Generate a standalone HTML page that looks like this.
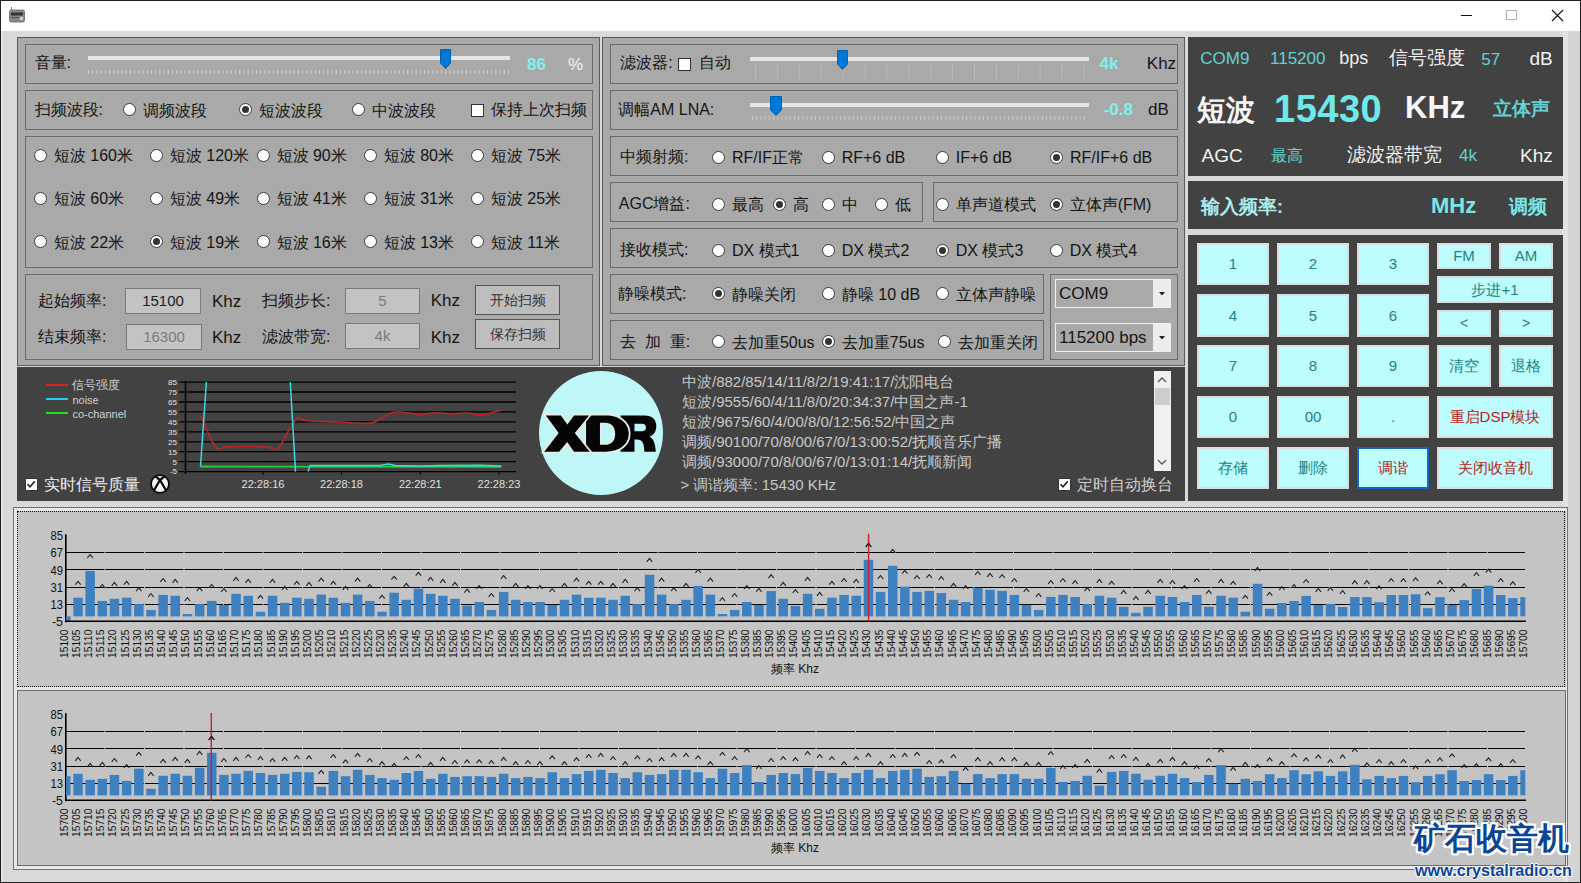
<!DOCTYPE html><html><head><meta charset="utf-8"><style>
html,body{margin:0;padding:0;}
body{width:1581px;height:883px;overflow:hidden;position:relative;background:#d9d9d9;font-family:"Liberation Sans", sans-serif;}
.t{position:absolute;white-space:nowrap;}
.r{position:absolute;}
.rad{position:absolute;width:13px;height:13px;box-sizing:border-box;border:1px solid #3a3a3a;border-radius:50%;background:#fff;}
.dot{position:absolute;width:7px;height:7px;border-radius:50%;background:#333;}
.chk{position:absolute;width:13px;height:13px;box-sizing:border-box;border:1px solid #333;background:#fff;}
</style></head><body>
<div class="r" style="left:0px;top:0px;width:1581px;height:31px;background:#fff;"></div>
<div class="r" style="left:1568px;top:31px;width:12px;height:851px;background:#d4d4d4;"></div>
<div class="r" style="left:1563px;top:31px;width:5px;height:851px;background:#e2e2e2;"></div>
<div class="r" style="left:1px;top:31px;width:2px;height:851px;background:#e4e4e4;"></div>
<div class="r" style="left:0px;top:0px;width:1581px;height:1px;background:#222;"></div>
<div class="r" style="left:0px;top:0px;width:1px;height:883px;background:#222;"></div>
<div class="r" style="left:1580px;top:0px;width:1px;height:883px;background:#222;"></div>
<div class="r" style="left:0px;top:882px;width:1581px;height:1px;background:#222;"></div>
<svg class="r" style="left:8px;top:6px" width="20" height="18" viewBox="0 0 20 18">
<line x1="3.5" y1="1" x2="3.5" y2="5" stroke="#777" stroke-width="1"/>
<rect x="1.5" y="4" width="15" height="12" rx="1.5" fill="#8a8a8a" stroke="#666" stroke-width="0.8"/>
<rect x="3" y="6.5" width="12" height="3" fill="#333"/>
<rect x="3" y="11" width="8" height="1.2" fill="#555"/>
<rect x="12" y="11" width="3" height="3" fill="#ccc"/>
</svg>
<div class="r" style="left:1461px;top:15px;width:11px;height:1px;background:#111;"></div>
<div class="r" style="left:1506px;top:10px;width:11px;height:10px;border:1px solid #b0b0b0;box-sizing:border-box;"></div>
<svg class="r" style="left:1551px;top:9px" width="13" height="13"><path d="M1 1 L12 12 M12 1 L1 12" stroke="#111" stroke-width="1.1"/></svg>
<div class="r" style="left:17px;top:37px;width:583px;height:329px;background:#a9a9a9;border:1px solid #5a5a5a;box-sizing:border-box;"></div>
<div class="r" style="left:25px;top:44px;width:568px;height:40px;background:#a9a9a9;border:1px solid #6a6a6a;box-sizing:border-box;"></div>
<div class="r" style="left:25px;top:90px;width:568px;height:40px;background:#a9a9a9;border:1px solid #6a6a6a;box-sizing:border-box;"></div>
<div class="r" style="left:25px;top:136px;width:568px;height:132px;background:#a9a9a9;border:1px solid #6a6a6a;box-sizing:border-box;"></div>
<div class="r" style="left:25px;top:274px;width:568px;height:86px;background:#a9a9a9;border:1px solid #6a6a6a;box-sizing:border-box;"></div>
<div class="t" style="left:34.5px;top:52.5px;font-size:16px;line-height:20px;color:#151515;">音量:</div>
<div class="r" style="left:88px;top:56px;width:422px;height:4px;background:#e6e6e6;"></div>
<svg class="r" style="left:88px;top:70px" width="424" height="5"><rect x="0.0" y="0" width="1" height="4" fill="#cbcbcb"/><rect x="4.2" y="0" width="1" height="4" fill="#cbcbcb"/><rect x="8.4" y="0" width="1" height="4" fill="#cbcbcb"/><rect x="12.6" y="0" width="1" height="4" fill="#cbcbcb"/><rect x="16.8" y="0" width="1" height="4" fill="#cbcbcb"/><rect x="21.0" y="0" width="1" height="4" fill="#cbcbcb"/><rect x="25.2" y="0" width="1" height="4" fill="#cbcbcb"/><rect x="29.4" y="0" width="1" height="4" fill="#cbcbcb"/><rect x="33.6" y="0" width="1" height="4" fill="#cbcbcb"/><rect x="37.8" y="0" width="1" height="4" fill="#cbcbcb"/><rect x="42.0" y="0" width="1" height="4" fill="#cbcbcb"/><rect x="46.2" y="0" width="1" height="4" fill="#cbcbcb"/><rect x="50.4" y="0" width="1" height="4" fill="#cbcbcb"/><rect x="54.6" y="0" width="1" height="4" fill="#cbcbcb"/><rect x="58.8" y="0" width="1" height="4" fill="#cbcbcb"/><rect x="63.0" y="0" width="1" height="4" fill="#cbcbcb"/><rect x="67.2" y="0" width="1" height="4" fill="#cbcbcb"/><rect x="71.4" y="0" width="1" height="4" fill="#cbcbcb"/><rect x="75.6" y="0" width="1" height="4" fill="#cbcbcb"/><rect x="79.8" y="0" width="1" height="4" fill="#cbcbcb"/><rect x="84.0" y="0" width="1" height="4" fill="#cbcbcb"/><rect x="88.2" y="0" width="1" height="4" fill="#cbcbcb"/><rect x="92.4" y="0" width="1" height="4" fill="#cbcbcb"/><rect x="96.6" y="0" width="1" height="4" fill="#cbcbcb"/><rect x="100.8" y="0" width="1" height="4" fill="#cbcbcb"/><rect x="105.0" y="0" width="1" height="4" fill="#cbcbcb"/><rect x="109.2" y="0" width="1" height="4" fill="#cbcbcb"/><rect x="113.4" y="0" width="1" height="4" fill="#cbcbcb"/><rect x="117.6" y="0" width="1" height="4" fill="#cbcbcb"/><rect x="121.8" y="0" width="1" height="4" fill="#cbcbcb"/><rect x="126.0" y="0" width="1" height="4" fill="#cbcbcb"/><rect x="130.2" y="0" width="1" height="4" fill="#cbcbcb"/><rect x="134.4" y="0" width="1" height="4" fill="#cbcbcb"/><rect x="138.6" y="0" width="1" height="4" fill="#cbcbcb"/><rect x="142.8" y="0" width="1" height="4" fill="#cbcbcb"/><rect x="147.0" y="0" width="1" height="4" fill="#cbcbcb"/><rect x="151.2" y="0" width="1" height="4" fill="#cbcbcb"/><rect x="155.4" y="0" width="1" height="4" fill="#cbcbcb"/><rect x="159.6" y="0" width="1" height="4" fill="#cbcbcb"/><rect x="163.8" y="0" width="1" height="4" fill="#cbcbcb"/><rect x="168.0" y="0" width="1" height="4" fill="#cbcbcb"/><rect x="172.2" y="0" width="1" height="4" fill="#cbcbcb"/><rect x="176.4" y="0" width="1" height="4" fill="#cbcbcb"/><rect x="180.6" y="0" width="1" height="4" fill="#cbcbcb"/><rect x="184.8" y="0" width="1" height="4" fill="#cbcbcb"/><rect x="189.0" y="0" width="1" height="4" fill="#cbcbcb"/><rect x="193.2" y="0" width="1" height="4" fill="#cbcbcb"/><rect x="197.4" y="0" width="1" height="4" fill="#cbcbcb"/><rect x="201.6" y="0" width="1" height="4" fill="#cbcbcb"/><rect x="205.8" y="0" width="1" height="4" fill="#cbcbcb"/><rect x="210.0" y="0" width="1" height="4" fill="#cbcbcb"/><rect x="214.2" y="0" width="1" height="4" fill="#cbcbcb"/><rect x="218.4" y="0" width="1" height="4" fill="#cbcbcb"/><rect x="222.6" y="0" width="1" height="4" fill="#cbcbcb"/><rect x="226.8" y="0" width="1" height="4" fill="#cbcbcb"/><rect x="231.0" y="0" width="1" height="4" fill="#cbcbcb"/><rect x="235.2" y="0" width="1" height="4" fill="#cbcbcb"/><rect x="239.4" y="0" width="1" height="4" fill="#cbcbcb"/><rect x="243.6" y="0" width="1" height="4" fill="#cbcbcb"/><rect x="247.8" y="0" width="1" height="4" fill="#cbcbcb"/><rect x="252.0" y="0" width="1" height="4" fill="#cbcbcb"/><rect x="256.2" y="0" width="1" height="4" fill="#cbcbcb"/><rect x="260.4" y="0" width="1" height="4" fill="#cbcbcb"/><rect x="264.6" y="0" width="1" height="4" fill="#cbcbcb"/><rect x="268.8" y="0" width="1" height="4" fill="#cbcbcb"/><rect x="273.0" y="0" width="1" height="4" fill="#cbcbcb"/><rect x="277.2" y="0" width="1" height="4" fill="#cbcbcb"/><rect x="281.4" y="0" width="1" height="4" fill="#cbcbcb"/><rect x="285.6" y="0" width="1" height="4" fill="#cbcbcb"/><rect x="289.8" y="0" width="1" height="4" fill="#cbcbcb"/><rect x="294.0" y="0" width="1" height="4" fill="#cbcbcb"/><rect x="298.2" y="0" width="1" height="4" fill="#cbcbcb"/><rect x="302.4" y="0" width="1" height="4" fill="#cbcbcb"/><rect x="306.6" y="0" width="1" height="4" fill="#cbcbcb"/><rect x="310.8" y="0" width="1" height="4" fill="#cbcbcb"/><rect x="315.0" y="0" width="1" height="4" fill="#cbcbcb"/><rect x="319.2" y="0" width="1" height="4" fill="#cbcbcb"/><rect x="323.4" y="0" width="1" height="4" fill="#cbcbcb"/><rect x="327.6" y="0" width="1" height="4" fill="#cbcbcb"/><rect x="331.8" y="0" width="1" height="4" fill="#cbcbcb"/><rect x="336.0" y="0" width="1" height="4" fill="#cbcbcb"/><rect x="340.2" y="0" width="1" height="4" fill="#cbcbcb"/><rect x="344.4" y="0" width="1" height="4" fill="#cbcbcb"/><rect x="348.6" y="0" width="1" height="4" fill="#cbcbcb"/><rect x="352.8" y="0" width="1" height="4" fill="#cbcbcb"/><rect x="357.0" y="0" width="1" height="4" fill="#cbcbcb"/><rect x="361.2" y="0" width="1" height="4" fill="#cbcbcb"/><rect x="365.4" y="0" width="1" height="4" fill="#cbcbcb"/><rect x="369.6" y="0" width="1" height="4" fill="#cbcbcb"/><rect x="373.8" y="0" width="1" height="4" fill="#cbcbcb"/><rect x="378.0" y="0" width="1" height="4" fill="#cbcbcb"/><rect x="382.2" y="0" width="1" height="4" fill="#cbcbcb"/><rect x="386.4" y="0" width="1" height="4" fill="#cbcbcb"/><rect x="390.6" y="0" width="1" height="4" fill="#cbcbcb"/><rect x="394.8" y="0" width="1" height="4" fill="#cbcbcb"/><rect x="399.0" y="0" width="1" height="4" fill="#cbcbcb"/><rect x="403.2" y="0" width="1" height="4" fill="#cbcbcb"/><rect x="407.4" y="0" width="1" height="4" fill="#cbcbcb"/><rect x="411.6" y="0" width="1" height="4" fill="#cbcbcb"/><rect x="415.8" y="0" width="1" height="4" fill="#cbcbcb"/><rect x="420.0" y="0" width="1" height="4" fill="#cbcbcb"/></svg>
<svg class="r" style="left:440px;top:49px" width="12" height="21"><path d="M0.5 0.5 H10.5 V14 L5.5 19.5 L0.5 14 Z" fill="#0078d7" stroke="#0063b1" stroke-width="1"/></svg>
<div class="t" style="left:527.0px;top:53.5px;font-size:17px;line-height:22px;color:#7ff0ee;font-weight:bold;">86</div>
<div class="t" style="left:568.0px;top:54.0px;font-size:17px;line-height:22px;color:#f4f4f4;">%</div>
<div class="t" style="left:34.5px;top:99.5px;font-size:16px;line-height:20px;color:#151515;">扫频波段:</div>
<div class="rad" style="left:123.0px;top:103.0px;"></div>
<div class="t" style="left:143.0px;top:100.5px;font-size:16px;line-height:20px;color:#151515;">调频波段</div>
<div class="rad" style="left:238.8px;top:103.0px;"></div>
<div class="dot" style="left:241.8px;top:106.0px;"></div>
<div class="t" style="left:258.8px;top:100.5px;font-size:16px;line-height:20px;color:#151515;">短波波段</div>
<div class="rad" style="left:351.8px;top:103.0px;"></div>
<div class="t" style="left:371.8px;top:100.5px;font-size:16px;line-height:20px;color:#151515;">中波波段</div>
<div class="chk" style="left:471px;top:104px;"></div>
<div class="t" style="left:491.3px;top:99.5px;font-size:16px;line-height:20px;color:#151515;">保持上次扫频</div>
<div class="rad" style="left:33.8px;top:148.5px;"></div>
<div class="t" style="left:53.8px;top:146.0px;font-size:16px;line-height:20px;color:#151515;">短波 160米</div>
<div class="rad" style="left:149.8px;top:148.5px;"></div>
<div class="t" style="left:169.8px;top:146.0px;font-size:16px;line-height:20px;color:#151515;">短波 120米</div>
<div class="rad" style="left:256.5px;top:148.5px;"></div>
<div class="t" style="left:276.5px;top:146.0px;font-size:16px;line-height:20px;color:#151515;">短波 90米</div>
<div class="rad" style="left:363.7px;top:148.5px;"></div>
<div class="t" style="left:383.7px;top:146.0px;font-size:16px;line-height:20px;color:#151515;">短波 80米</div>
<div class="rad" style="left:470.9px;top:148.5px;"></div>
<div class="t" style="left:490.9px;top:146.0px;font-size:16px;line-height:20px;color:#151515;">短波 75米</div>
<div class="rad" style="left:33.8px;top:191.8px;"></div>
<div class="t" style="left:53.8px;top:189.3px;font-size:16px;line-height:20px;color:#151515;">短波 60米</div>
<div class="rad" style="left:149.8px;top:191.8px;"></div>
<div class="t" style="left:169.8px;top:189.3px;font-size:16px;line-height:20px;color:#151515;">短波 49米</div>
<div class="rad" style="left:256.5px;top:191.8px;"></div>
<div class="t" style="left:276.5px;top:189.3px;font-size:16px;line-height:20px;color:#151515;">短波 41米</div>
<div class="rad" style="left:363.7px;top:191.8px;"></div>
<div class="t" style="left:383.7px;top:189.3px;font-size:16px;line-height:20px;color:#151515;">短波 31米</div>
<div class="rad" style="left:470.9px;top:191.8px;"></div>
<div class="t" style="left:490.9px;top:189.3px;font-size:16px;line-height:20px;color:#151515;">短波 25米</div>
<div class="rad" style="left:33.8px;top:235.3px;"></div>
<div class="t" style="left:53.8px;top:232.8px;font-size:16px;line-height:20px;color:#151515;">短波 22米</div>
<div class="rad" style="left:149.8px;top:235.3px;"></div>
<div class="dot" style="left:152.8px;top:238.3px;"></div>
<div class="t" style="left:169.8px;top:232.8px;font-size:16px;line-height:20px;color:#151515;">短波 19米</div>
<div class="rad" style="left:256.5px;top:235.3px;"></div>
<div class="t" style="left:276.5px;top:232.8px;font-size:16px;line-height:20px;color:#151515;">短波 16米</div>
<div class="rad" style="left:363.7px;top:235.3px;"></div>
<div class="t" style="left:383.7px;top:232.8px;font-size:16px;line-height:20px;color:#151515;">短波 13米</div>
<div class="rad" style="left:470.9px;top:235.3px;"></div>
<div class="t" style="left:490.9px;top:232.8px;font-size:16px;line-height:20px;color:#151515;">短波 11米</div>
<div class="t" style="left:38.0px;top:291.0px;font-size:16px;line-height:20px;color:#151515;">起始频率:</div>
<div class="r" style="left:125px;top:288px;width:76px;height:26px;background:#c3c3c3;border:1px solid #7a7a7a;box-sizing:border-box;"></div>
<div class="t" style="left:125px;top:288px;width:76px;height:26px;line-height:26px;text-align:center;font-size:15px;color:#222;">15100</div>
<div class="t" style="left:212.0px;top:290.5px;font-size:17px;line-height:22px;color:#151515;">Khz</div>
<div class="t" style="left:262.0px;top:290.5px;font-size:16px;line-height:20px;color:#151515;">扫频步长:</div>
<div class="r" style="left:345px;top:288px;width:75px;height:26px;background:#c3c3c3;border:1px solid #7a7a7a;box-sizing:border-box;"></div>
<div class="t" style="left:345px;top:288px;width:75px;height:26px;line-height:26px;text-align:center;font-size:15px;color:#7b7b7b;">5</div>
<div class="t" style="left:430.7px;top:289.5px;font-size:17px;line-height:22px;color:#151515;">Khz</div>
<div class="r" style="left:475px;top:285px;width:85px;height:30px;background:#bdbdbd;border:1px solid #555;box-sizing:border-box;"></div>
<div class="t" style="left:475px;top:285px;width:85px;height:30px;line-height:30px;text-align:center;font-size:14px;color:#333;">开始扫频</div>
<div class="t" style="left:38.0px;top:327.0px;font-size:16px;line-height:20px;color:#151515;">结束频率:</div>
<div class="r" style="left:126px;top:324px;width:76px;height:26px;background:#c3c3c3;border:1px solid #7a7a7a;box-sizing:border-box;"></div>
<div class="t" style="left:126px;top:324px;width:76px;height:26px;line-height:26px;text-align:center;font-size:15px;color:#7b7b7b;">16300</div>
<div class="t" style="left:212.0px;top:327.0px;font-size:17px;line-height:22px;color:#151515;">Khz</div>
<div class="t" style="left:262.0px;top:327.0px;font-size:16px;line-height:20px;color:#151515;">滤波带宽:</div>
<div class="r" style="left:345px;top:323px;width:75px;height:26px;background:#c3c3c3;border:1px solid #7a7a7a;box-sizing:border-box;"></div>
<div class="t" style="left:345px;top:323px;width:75px;height:26px;line-height:26px;text-align:center;font-size:15px;color:#7b7b7b;">4k</div>
<div class="t" style="left:430.7px;top:327.0px;font-size:17px;line-height:22px;color:#151515;">Khz</div>
<div class="r" style="left:475px;top:319px;width:85px;height:30px;background:#bdbdbd;border:1px solid #555;box-sizing:border-box;"></div>
<div class="t" style="left:475px;top:319px;width:85px;height:30px;line-height:30px;text-align:center;font-size:14px;color:#333;">保存扫频</div>
<div class="r" style="left:602px;top:37px;width:583px;height:329px;background:#a9a9a9;border:1px solid #5a5a5a;box-sizing:border-box;"></div>
<div class="r" style="left:610px;top:44px;width:568px;height:40px;background:#a9a9a9;border:1px solid #6a6a6a;box-sizing:border-box;"></div>
<div class="r" style="left:610px;top:90px;width:568px;height:40px;background:#a9a9a9;border:1px solid #6a6a6a;box-sizing:border-box;"></div>
<div class="r" style="left:610px;top:136px;width:568px;height:40px;background:#a9a9a9;border:1px solid #6a6a6a;box-sizing:border-box;"></div>
<div class="r" style="left:610px;top:182px;width:313px;height:40px;background:#a9a9a9;border:1px solid #6a6a6a;box-sizing:border-box;"></div>
<div class="r" style="left:933px;top:182px;width:245px;height:40px;background:#a9a9a9;border:1px solid #6a6a6a;box-sizing:border-box;"></div>
<div class="r" style="left:610px;top:228px;width:568px;height:40px;background:#a9a9a9;border:1px solid #6a6a6a;box-sizing:border-box;"></div>
<div class="r" style="left:610px;top:274px;width:434px;height:40px;background:#a9a9a9;border:1px solid #6a6a6a;box-sizing:border-box;"></div>
<div class="r" style="left:610px;top:320px;width:434px;height:40px;background:#a9a9a9;border:1px solid #6a6a6a;box-sizing:border-box;"></div>
<div class="r" style="left:1050px;top:274px;width:128px;height:86px;background:#a9a9a9;border:1px solid #6a6a6a;box-sizing:border-box;"></div>
<div class="t" style="left:620.3px;top:53.0px;font-size:16px;line-height:20px;color:#151515;">滤波器:</div>
<div class="chk" style="left:678px;top:58px;"></div>
<div class="t" style="left:698.6px;top:53.0px;font-size:16px;line-height:20px;color:#151515;">自动</div>
<div class="r" style="left:750px;top:57px;width:339px;height:4px;background:#e6e6e6;"></div>
<svg class="r" style="left:750px;top:64px" width="345" height="16"><rect x="5.0" y="0" width="1" height="15" fill="#bababa"/><rect x="26.9" y="0" width="1" height="15" fill="#bababa"/><rect x="48.8" y="0" width="1" height="15" fill="#bababa"/><rect x="70.7" y="0" width="1" height="15" fill="#bababa"/><rect x="92.6" y="0" width="1" height="15" fill="#bababa"/><rect x="114.5" y="0" width="1" height="15" fill="#bababa"/><rect x="136.4" y="0" width="1" height="15" fill="#bababa"/><rect x="158.3" y="0" width="1" height="15" fill="#bababa"/><rect x="180.2" y="0" width="1" height="15" fill="#bababa"/><rect x="202.1" y="0" width="1" height="15" fill="#bababa"/><rect x="224.0" y="0" width="1" height="15" fill="#bababa"/><rect x="245.9" y="0" width="1" height="15" fill="#bababa"/><rect x="267.8" y="0" width="1" height="15" fill="#bababa"/><rect x="289.7" y="0" width="1" height="15" fill="#bababa"/><rect x="311.6" y="0" width="1" height="15" fill="#bababa"/><rect x="333.5" y="0" width="1" height="15" fill="#bababa"/></svg>
<svg class="r" style="left:837px;top:50px" width="12" height="21"><path d="M0.5 0.5 H10.5 V14 L5.5 19.5 L0.5 14 Z" fill="#0078d7" stroke="#0063b1" stroke-width="1"/></svg>
<div class="t" style="left:1099.6px;top:52.5px;font-size:17px;line-height:22px;color:#7ff0ee;font-weight:bold;">4k</div>
<div class="t" style="left:1146.8px;top:52.5px;font-size:17px;line-height:22px;color:#151515;">Khz</div>
<div class="t" style="left:618.3px;top:100.0px;font-size:16px;line-height:20px;color:#151515;">调幅AM LNA:</div>
<div class="r" style="left:750px;top:103px;width:339px;height:4px;background:#e6e6e6;"></div>
<svg class="r" style="left:752px;top:116px" width="345" height="5"><rect x="0.0" y="0" width="1" height="4" fill="#cbcbcb"/><rect x="4.2" y="0" width="1" height="4" fill="#cbcbcb"/><rect x="8.4" y="0" width="1" height="4" fill="#cbcbcb"/><rect x="12.6" y="0" width="1" height="4" fill="#cbcbcb"/><rect x="16.8" y="0" width="1" height="4" fill="#cbcbcb"/><rect x="21.0" y="0" width="1" height="4" fill="#cbcbcb"/><rect x="25.2" y="0" width="1" height="4" fill="#cbcbcb"/><rect x="29.4" y="0" width="1" height="4" fill="#cbcbcb"/><rect x="33.6" y="0" width="1" height="4" fill="#cbcbcb"/><rect x="37.8" y="0" width="1" height="4" fill="#cbcbcb"/><rect x="42.0" y="0" width="1" height="4" fill="#cbcbcb"/><rect x="46.2" y="0" width="1" height="4" fill="#cbcbcb"/><rect x="50.4" y="0" width="1" height="4" fill="#cbcbcb"/><rect x="54.6" y="0" width="1" height="4" fill="#cbcbcb"/><rect x="58.8" y="0" width="1" height="4" fill="#cbcbcb"/><rect x="63.0" y="0" width="1" height="4" fill="#cbcbcb"/><rect x="67.2" y="0" width="1" height="4" fill="#cbcbcb"/><rect x="71.4" y="0" width="1" height="4" fill="#cbcbcb"/><rect x="75.6" y="0" width="1" height="4" fill="#cbcbcb"/><rect x="79.8" y="0" width="1" height="4" fill="#cbcbcb"/><rect x="84.0" y="0" width="1" height="4" fill="#cbcbcb"/><rect x="88.2" y="0" width="1" height="4" fill="#cbcbcb"/><rect x="92.4" y="0" width="1" height="4" fill="#cbcbcb"/><rect x="96.6" y="0" width="1" height="4" fill="#cbcbcb"/><rect x="100.8" y="0" width="1" height="4" fill="#cbcbcb"/><rect x="105.0" y="0" width="1" height="4" fill="#cbcbcb"/><rect x="109.2" y="0" width="1" height="4" fill="#cbcbcb"/><rect x="113.4" y="0" width="1" height="4" fill="#cbcbcb"/><rect x="117.6" y="0" width="1" height="4" fill="#cbcbcb"/><rect x="121.8" y="0" width="1" height="4" fill="#cbcbcb"/><rect x="126.0" y="0" width="1" height="4" fill="#cbcbcb"/><rect x="130.2" y="0" width="1" height="4" fill="#cbcbcb"/><rect x="134.4" y="0" width="1" height="4" fill="#cbcbcb"/><rect x="138.6" y="0" width="1" height="4" fill="#cbcbcb"/><rect x="142.8" y="0" width="1" height="4" fill="#cbcbcb"/><rect x="147.0" y="0" width="1" height="4" fill="#cbcbcb"/><rect x="151.2" y="0" width="1" height="4" fill="#cbcbcb"/><rect x="155.4" y="0" width="1" height="4" fill="#cbcbcb"/><rect x="159.6" y="0" width="1" height="4" fill="#cbcbcb"/><rect x="163.8" y="0" width="1" height="4" fill="#cbcbcb"/><rect x="168.0" y="0" width="1" height="4" fill="#cbcbcb"/><rect x="172.2" y="0" width="1" height="4" fill="#cbcbcb"/><rect x="176.4" y="0" width="1" height="4" fill="#cbcbcb"/><rect x="180.6" y="0" width="1" height="4" fill="#cbcbcb"/><rect x="184.8" y="0" width="1" height="4" fill="#cbcbcb"/><rect x="189.0" y="0" width="1" height="4" fill="#cbcbcb"/><rect x="193.2" y="0" width="1" height="4" fill="#cbcbcb"/><rect x="197.4" y="0" width="1" height="4" fill="#cbcbcb"/><rect x="201.6" y="0" width="1" height="4" fill="#cbcbcb"/><rect x="205.8" y="0" width="1" height="4" fill="#cbcbcb"/><rect x="210.0" y="0" width="1" height="4" fill="#cbcbcb"/><rect x="214.2" y="0" width="1" height="4" fill="#cbcbcb"/><rect x="218.4" y="0" width="1" height="4" fill="#cbcbcb"/><rect x="222.6" y="0" width="1" height="4" fill="#cbcbcb"/><rect x="226.8" y="0" width="1" height="4" fill="#cbcbcb"/><rect x="231.0" y="0" width="1" height="4" fill="#cbcbcb"/><rect x="235.2" y="0" width="1" height="4" fill="#cbcbcb"/><rect x="239.4" y="0" width="1" height="4" fill="#cbcbcb"/><rect x="243.6" y="0" width="1" height="4" fill="#cbcbcb"/><rect x="247.8" y="0" width="1" height="4" fill="#cbcbcb"/><rect x="252.0" y="0" width="1" height="4" fill="#cbcbcb"/><rect x="256.2" y="0" width="1" height="4" fill="#cbcbcb"/><rect x="260.4" y="0" width="1" height="4" fill="#cbcbcb"/><rect x="264.6" y="0" width="1" height="4" fill="#cbcbcb"/><rect x="268.8" y="0" width="1" height="4" fill="#cbcbcb"/><rect x="273.0" y="0" width="1" height="4" fill="#cbcbcb"/><rect x="277.2" y="0" width="1" height="4" fill="#cbcbcb"/><rect x="281.4" y="0" width="1" height="4" fill="#cbcbcb"/><rect x="285.6" y="0" width="1" height="4" fill="#cbcbcb"/><rect x="289.8" y="0" width="1" height="4" fill="#cbcbcb"/><rect x="294.0" y="0" width="1" height="4" fill="#cbcbcb"/><rect x="298.2" y="0" width="1" height="4" fill="#cbcbcb"/><rect x="302.4" y="0" width="1" height="4" fill="#cbcbcb"/><rect x="306.6" y="0" width="1" height="4" fill="#cbcbcb"/><rect x="310.8" y="0" width="1" height="4" fill="#cbcbcb"/><rect x="315.0" y="0" width="1" height="4" fill="#cbcbcb"/><rect x="319.2" y="0" width="1" height="4" fill="#cbcbcb"/><rect x="323.4" y="0" width="1" height="4" fill="#cbcbcb"/><rect x="327.6" y="0" width="1" height="4" fill="#cbcbcb"/><rect x="331.8" y="0" width="1" height="4" fill="#cbcbcb"/></svg>
<svg class="r" style="left:770px;top:96px" width="13" height="21"><path d="M0.5 0.5 H11.5 V14 L6 19.5 L0.5 14 Z" fill="#0078d7" stroke="#0063b1" stroke-width="1"/></svg>
<div class="t" style="left:1103.7px;top:98.5px;font-size:17px;line-height:22px;color:#7ff0ee;font-weight:bold;">-0.8</div>
<div class="t" style="left:1148.0px;top:98.5px;font-size:17px;line-height:22px;color:#151515;">dB</div>
<div class="t" style="left:620.0px;top:147.0px;font-size:16px;line-height:20px;color:#151515;">中频射频:</div>
<div class="rad" style="left:712.0px;top:150.5px;"></div>
<div class="t" style="left:732.0px;top:148.0px;font-size:16px;line-height:20px;color:#151515;">RF/IF正常</div>
<div class="rad" style="left:821.7px;top:150.5px;"></div>
<div class="t" style="left:841.7px;top:148.0px;font-size:16px;line-height:20px;color:#151515;">RF+6 dB</div>
<div class="rad" style="left:935.8px;top:150.5px;"></div>
<div class="t" style="left:955.8px;top:148.0px;font-size:16px;line-height:20px;color:#151515;">IF+6 dB</div>
<div class="rad" style="left:1050.0px;top:150.5px;"></div>
<div class="dot" style="left:1053.0px;top:153.5px;"></div>
<div class="t" style="left:1070.0px;top:148.0px;font-size:16px;line-height:20px;color:#151515;">RF/IF+6 dB</div>
<div class="t" style="left:618.8px;top:194.0px;font-size:16px;line-height:20px;color:#151515;">AGC增益:</div>
<div class="rad" style="left:711.9px;top:197.5px;"></div>
<div class="t" style="left:731.9px;top:195.0px;font-size:16px;line-height:20px;color:#151515;">最高</div>
<div class="rad" style="left:773.1px;top:197.5px;"></div>
<div class="dot" style="left:776.1px;top:200.5px;"></div>
<div class="t" style="left:793.1px;top:195.0px;font-size:16px;line-height:20px;color:#151515;">高</div>
<div class="rad" style="left:821.8px;top:197.5px;"></div>
<div class="t" style="left:841.8px;top:195.0px;font-size:16px;line-height:20px;color:#151515;">中</div>
<div class="rad" style="left:875.0px;top:197.5px;"></div>
<div class="t" style="left:895.0px;top:195.0px;font-size:16px;line-height:20px;color:#151515;">低</div>
<div class="rad" style="left:935.8px;top:197.5px;"></div>
<div class="t" style="left:955.8px;top:195.0px;font-size:16px;line-height:20px;color:#151515;">单声道模式</div>
<div class="rad" style="left:1049.7px;top:197.5px;"></div>
<div class="dot" style="left:1052.7px;top:200.5px;"></div>
<div class="t" style="left:1069.7px;top:195.0px;font-size:16px;line-height:20px;color:#151515;">立体声(FM)</div>
<div class="t" style="left:620.0px;top:240.0px;font-size:16px;line-height:20px;color:#151515;">接收模式:</div>
<div class="rad" style="left:711.9px;top:243.5px;"></div>
<div class="t" style="left:731.9px;top:241.0px;font-size:16px;line-height:20px;color:#151515;">DX 模式1</div>
<div class="rad" style="left:821.8px;top:243.5px;"></div>
<div class="t" style="left:841.8px;top:241.0px;font-size:16px;line-height:20px;color:#151515;">DX 模式2</div>
<div class="rad" style="left:935.8px;top:243.5px;"></div>
<div class="dot" style="left:938.8px;top:246.5px;"></div>
<div class="t" style="left:955.8px;top:241.0px;font-size:16px;line-height:20px;color:#151515;">DX 模式3</div>
<div class="rad" style="left:1049.7px;top:243.5px;"></div>
<div class="t" style="left:1069.7px;top:241.0px;font-size:16px;line-height:20px;color:#151515;">DX 模式4</div>
<div class="t" style="left:618.0px;top:284.0px;font-size:16px;line-height:20px;color:#151515;">静噪模式:</div>
<div class="rad" style="left:711.9px;top:287.0px;"></div>
<div class="dot" style="left:714.9px;top:290.0px;"></div>
<div class="t" style="left:731.9px;top:284.5px;font-size:16px;line-height:20px;color:#151515;">静噪关闭</div>
<div class="rad" style="left:821.8px;top:287.0px;"></div>
<div class="t" style="left:841.8px;top:284.5px;font-size:16px;line-height:20px;color:#151515;">静噪 10 dB</div>
<div class="rad" style="left:935.8px;top:287.0px;"></div>
<div class="t" style="left:955.8px;top:284.5px;font-size:16px;line-height:20px;color:#151515;">立体声静噪</div>
<div class="t" style="left:620.0px;top:331.5px;font-size:16px;line-height:20px;color:#151515;">去&nbsp;&nbsp;加&nbsp;&nbsp;重:</div>
<div class="rad" style="left:711.9px;top:335.0px;"></div>
<div class="t" style="left:731.9px;top:332.5px;font-size:16px;line-height:20px;color:#151515;">去加重50us</div>
<div class="rad" style="left:821.8px;top:335.0px;"></div>
<div class="dot" style="left:824.8px;top:338.0px;"></div>
<div class="t" style="left:841.8px;top:332.5px;font-size:16px;line-height:20px;color:#151515;">去加重75us</div>
<div class="rad" style="left:937.5px;top:335.0px;"></div>
<div class="t" style="left:957.5px;top:332.5px;font-size:16px;line-height:20px;color:#151515;">去加重关闭</div>
<div class="r" style="left:1055px;top:279px;width:116px;height:29px;background:#a9a9a9;border:1px solid #f0f0f0;box-sizing:border-box;"></div>
<div class="r" style="left:1153px;top:280px;width:17px;height:27px;background:#ececec;"></div>
<svg class="r" style="left:1159px;top:291.5px" width="6" height="4"><path d="M0 0 H6 L3 3.5 Z" fill="#222"/></svg>
<div class="t" style="left:1059.0px;top:282.5px;font-size:17px;line-height:22px;color:#151515;">COM9</div>
<div class="r" style="left:1055px;top:323px;width:116px;height:29px;background:#a9a9a9;border:1px solid #f0f0f0;box-sizing:border-box;"></div>
<div class="r" style="left:1153px;top:324px;width:17px;height:27px;background:#ececec;"></div>
<svg class="r" style="left:1159px;top:335.5px" width="6" height="4"><path d="M0 0 H6 L3 3.5 Z" fill="#222"/></svg>
<div class="t" style="left:1059.0px;top:326.5px;font-size:17px;line-height:22px;color:#151515;">115200 bps</div>
<div class="r" style="left:1188px;top:37px;width:375px;height:139px;background:#424242;"></div>
<div class="r" style="left:1188px;top:181px;width:375px;height:48px;background:#424242;"></div>
<div class="r" style="left:1188px;top:235px;width:375px;height:266px;background:#424242;"></div>
<div class="t" style="left:1200.3px;top:48.0px;font-size:17px;line-height:22px;color:#62d3d3;">COM9</div>
<div class="t" style="left:1270.0px;top:48.0px;font-size:17px;line-height:22px;color:#62d3d3;">115200</div>
<div class="t" style="left:1339.3px;top:46.5px;font-size:18px;line-height:23px;color:#f2f2f2;">bps</div>
<div class="t" style="left:1389.0px;top:46.0px;font-size:19px;line-height:24px;color:#f2f2f2;">信号强度</div>
<div class="t" style="left:1481.3px;top:49.0px;font-size:17px;line-height:22px;color:#62d3d3;">57</div>
<div class="t" style="left:1529.5px;top:47.0px;font-size:19px;line-height:24px;color:#f2f2f2;">dB</div>
<div class="t" style="left:1197.0px;top:91.5px;font-size:29px;line-height:37px;color:#f8f8f8;font-weight:bold;">短波</div>
<div class="t" style="left:1274.0px;top:84.5px;font-size:38px;line-height:49px;color:#6ee8e8;font-weight:bold;letter-spacing:0.5px;">15430</div>
<div class="t" style="left:1405.0px;top:88.0px;font-size:31px;line-height:40px;color:#f8f8f8;font-weight:bold;">KHz</div>
<div class="t" style="left:1493.0px;top:97.0px;font-size:19px;line-height:24px;color:#62d3d3;font-weight:bold;">立体声</div>
<div class="t" style="left:1201.5px;top:143.5px;font-size:19px;line-height:24px;color:#f2f2f2;">AGC</div>
<div class="t" style="left:1270.8px;top:146.0px;font-size:16px;line-height:20px;color:#62d3d3;">最高</div>
<div class="t" style="left:1347.4px;top:143.0px;font-size:19px;line-height:24px;color:#f2f2f2;">滤波器带宽</div>
<div class="t" style="left:1459.0px;top:145.0px;font-size:17px;line-height:22px;color:#62d3d3;">4k</div>
<div class="t" style="left:1520.0px;top:143.5px;font-size:19px;line-height:24px;color:#f2f2f2;">Khz</div>
<div class="t" style="left:1200.8px;top:194.5px;font-size:19px;line-height:24px;color:#a8ecec;font-weight:bold;">输入频率:</div>
<div class="t" style="left:1431.0px;top:191.5px;font-size:22px;line-height:28px;color:#7be6e6;font-weight:bold;">MHz</div>
<div class="t" style="left:1509.0px;top:194.5px;font-size:19px;line-height:24px;color:#7be6e6;font-weight:bold;">调频</div>
<div class="r" style="left:1197px;top:243px;width:72px;height:42px;background:#bdfdfd;border:2px solid #dcdcdc;box-sizing:border-box;"></div>
<div class="t" style="left:1197px;top:243px;width:72px;height:42px;line-height:42px;text-align:center;font-size:15px;color:#238282;">1</div>
<div class="r" style="left:1277px;top:243px;width:72px;height:42px;background:#bdfdfd;border:2px solid #dcdcdc;box-sizing:border-box;"></div>
<div class="t" style="left:1277px;top:243px;width:72px;height:42px;line-height:42px;text-align:center;font-size:15px;color:#238282;">2</div>
<div class="r" style="left:1357px;top:243px;width:72px;height:42px;background:#bdfdfd;border:2px solid #dcdcdc;box-sizing:border-box;"></div>
<div class="t" style="left:1357px;top:243px;width:72px;height:42px;line-height:42px;text-align:center;font-size:15px;color:#238282;">3</div>
<div class="r" style="left:1197px;top:294px;width:72px;height:43px;background:#bdfdfd;border:2px solid #dcdcdc;box-sizing:border-box;"></div>
<div class="t" style="left:1197px;top:294px;width:72px;height:43px;line-height:43px;text-align:center;font-size:15px;color:#238282;">4</div>
<div class="r" style="left:1277px;top:294px;width:72px;height:43px;background:#bdfdfd;border:2px solid #dcdcdc;box-sizing:border-box;"></div>
<div class="t" style="left:1277px;top:294px;width:72px;height:43px;line-height:43px;text-align:center;font-size:15px;color:#238282;">5</div>
<div class="r" style="left:1357px;top:294px;width:72px;height:43px;background:#bdfdfd;border:2px solid #dcdcdc;box-sizing:border-box;"></div>
<div class="t" style="left:1357px;top:294px;width:72px;height:43px;line-height:43px;text-align:center;font-size:15px;color:#238282;">6</div>
<div class="r" style="left:1197px;top:345px;width:72px;height:42px;background:#bdfdfd;border:2px solid #dcdcdc;box-sizing:border-box;"></div>
<div class="t" style="left:1197px;top:345px;width:72px;height:42px;line-height:42px;text-align:center;font-size:15px;color:#238282;">7</div>
<div class="r" style="left:1277px;top:345px;width:72px;height:42px;background:#bdfdfd;border:2px solid #dcdcdc;box-sizing:border-box;"></div>
<div class="t" style="left:1277px;top:345px;width:72px;height:42px;line-height:42px;text-align:center;font-size:15px;color:#238282;">8</div>
<div class="r" style="left:1357px;top:345px;width:72px;height:42px;background:#bdfdfd;border:2px solid #dcdcdc;box-sizing:border-box;"></div>
<div class="t" style="left:1357px;top:345px;width:72px;height:42px;line-height:42px;text-align:center;font-size:15px;color:#238282;">9</div>
<div class="r" style="left:1197px;top:396px;width:72px;height:42px;background:#bdfdfd;border:2px solid #dcdcdc;box-sizing:border-box;"></div>
<div class="t" style="left:1197px;top:396px;width:72px;height:42px;line-height:42px;text-align:center;font-size:15px;color:#238282;">0</div>
<div class="r" style="left:1277px;top:396px;width:72px;height:42px;background:#bdfdfd;border:2px solid #dcdcdc;box-sizing:border-box;"></div>
<div class="t" style="left:1277px;top:396px;width:72px;height:42px;line-height:42px;text-align:center;font-size:15px;color:#238282;">00</div>
<div class="r" style="left:1357px;top:396px;width:72px;height:42px;background:#bdfdfd;border:2px solid #dcdcdc;box-sizing:border-box;"></div>
<div class="t" style="left:1357px;top:396px;width:72px;height:42px;line-height:42px;text-align:center;font-size:15px;color:#238282;">.</div>
<div class="r" style="left:1197px;top:447px;width:72px;height:42px;background:#bdfdfd;border:2px solid #dcdcdc;box-sizing:border-box;"></div>
<div class="t" style="left:1197px;top:447px;width:72px;height:42px;line-height:42px;text-align:center;font-size:15px;color:#238282;">存储</div>
<div class="r" style="left:1277px;top:447px;width:72px;height:42px;background:#bdfdfd;border:2px solid #dcdcdc;box-sizing:border-box;"></div>
<div class="t" style="left:1277px;top:447px;width:72px;height:42px;line-height:42px;text-align:center;font-size:15px;color:#238282;">删除</div>
<div class="r" style="left:1357px;top:447px;width:72px;height:42px;background:#bdfdfd;border:2px solid #1565c0;box-sizing:border-box;"></div>
<div class="t" style="left:1357px;top:447px;width:72px;height:42px;line-height:42px;text-align:center;font-size:15px;color:#b82222;">调谐</div>
<div class="r" style="left:1437px;top:243px;width:54px;height:26px;background:#bdfdfd;border:2px solid #dcdcdc;box-sizing:border-box;"></div>
<div class="t" style="left:1437px;top:243px;width:54px;height:26px;line-height:26px;text-align:center;font-size:15px;color:#238282;">FM</div>
<div class="r" style="left:1499px;top:243px;width:54px;height:26px;background:#bdfdfd;border:2px solid #dcdcdc;box-sizing:border-box;"></div>
<div class="t" style="left:1499px;top:243px;width:54px;height:26px;line-height:26px;text-align:center;font-size:15px;color:#238282;">AM</div>
<div class="r" style="left:1437px;top:276px;width:116px;height:27px;background:#bdfdfd;border:2px solid #dcdcdc;box-sizing:border-box;"></div>
<div class="t" style="left:1437px;top:276px;width:116px;height:27px;line-height:27px;text-align:center;font-size:15px;color:#238282;">步进+1</div>
<div class="r" style="left:1437px;top:310px;width:54px;height:27px;background:#bdfdfd;border:2px solid #dcdcdc;box-sizing:border-box;"></div>
<div class="t" style="left:1437px;top:310px;width:54px;height:27px;line-height:27px;text-align:center;font-size:14px;color:#238282;">&lt;</div>
<div class="r" style="left:1499px;top:310px;width:54px;height:27px;background:#bdfdfd;border:2px solid #dcdcdc;box-sizing:border-box;"></div>
<div class="t" style="left:1499px;top:310px;width:54px;height:27px;line-height:27px;text-align:center;font-size:14px;color:#238282;">&gt;</div>
<div class="r" style="left:1437px;top:345px;width:54px;height:42px;background:#bdfdfd;border:2px solid #dcdcdc;box-sizing:border-box;"></div>
<div class="t" style="left:1437px;top:345px;width:54px;height:42px;line-height:42px;text-align:center;font-size:15px;color:#238282;">清空</div>
<div class="r" style="left:1499px;top:345px;width:54px;height:42px;background:#bdfdfd;border:2px solid #dcdcdc;box-sizing:border-box;"></div>
<div class="t" style="left:1499px;top:345px;width:54px;height:42px;line-height:42px;text-align:center;font-size:15px;color:#238282;">退格</div>
<div class="r" style="left:1437px;top:396px;width:116px;height:42px;background:#bdfdfd;border:2px solid #dcdcdc;box-sizing:border-box;"></div>
<div class="t" style="left:1437px;top:396px;width:116px;height:42px;line-height:42px;text-align:center;font-size:15px;color:#b82222;">重启DSP模块</div>
<div class="r" style="left:1437px;top:447px;width:116px;height:42px;background:#bdfdfd;border:2px solid #dcdcdc;box-sizing:border-box;"></div>
<div class="t" style="left:1437px;top:447px;width:116px;height:42px;line-height:42px;text-align:center;font-size:15px;color:#b82222;">关闭收音机</div>
<div class="r" style="left:17px;top:367px;width:1168px;height:134px;background:#424242;"></div>
<div class="r" style="left:46px;top:384px;width:22px;height:2px;background:#e02020;"></div>
<div class="r" style="left:46px;top:398px;width:22px;height:2px;background:#20d0f0;"></div>
<div class="r" style="left:46px;top:412px;width:22px;height:2px;background:#20e020;"></div>
<div class="t" style="left:72.4px;top:378.0px;font-size:11.5px;line-height:14px;color:#d0d0d0;">信号强度</div>
<div class="t" style="left:72.4px;top:392.5px;font-size:11px;line-height:14px;color:#d0d0d0;">noise</div>
<div class="t" style="left:72.4px;top:406.5px;font-size:11px;line-height:14px;color:#d0d0d0;">co-channel</div>
<svg class="r" style="left:0px;top:367px" width="560" height="134" viewBox="0 367 560 134"><line x1="179" y1="382.1" x2="516" y2="382.1" stroke="#000" stroke-width="1.3"/><text x="177" y="384.9" font-size="8" fill="#e0e0e0" text-anchor="end" font-family="Liberation Sans">85</text><line x1="179" y1="392.0" x2="516" y2="392.0" stroke="#000" stroke-width="1.3"/><text x="177" y="394.8" font-size="8" fill="#e0e0e0" text-anchor="end" font-family="Liberation Sans">75</text><line x1="179" y1="402.0" x2="516" y2="402.0" stroke="#000" stroke-width="1.3"/><text x="177" y="404.8" font-size="8" fill="#e0e0e0" text-anchor="end" font-family="Liberation Sans">65</text><line x1="179" y1="411.9" x2="516" y2="411.9" stroke="#000" stroke-width="1.3"/><text x="177" y="414.7" font-size="8" fill="#e0e0e0" text-anchor="end" font-family="Liberation Sans">55</text><line x1="179" y1="421.9" x2="516" y2="421.9" stroke="#000" stroke-width="1.3"/><text x="177" y="424.7" font-size="8" fill="#e0e0e0" text-anchor="end" font-family="Liberation Sans">45</text><line x1="179" y1="431.8" x2="516" y2="431.8" stroke="#000" stroke-width="1.3"/><text x="177" y="434.6" font-size="8" fill="#e0e0e0" text-anchor="end" font-family="Liberation Sans">35</text><line x1="179" y1="441.8" x2="516" y2="441.8" stroke="#000" stroke-width="1.3"/><text x="177" y="444.6" font-size="8" fill="#e0e0e0" text-anchor="end" font-family="Liberation Sans">25</text><line x1="179" y1="451.7" x2="516" y2="451.7" stroke="#000" stroke-width="1.3"/><text x="177" y="454.5" font-size="8" fill="#e0e0e0" text-anchor="end" font-family="Liberation Sans">15</text><line x1="179" y1="461.7" x2="516" y2="461.7" stroke="#000" stroke-width="1.3"/><text x="177" y="464.5" font-size="8" fill="#e0e0e0" text-anchor="end" font-family="Liberation Sans">5</text><line x1="179" y1="471.6" x2="516" y2="471.6" stroke="#000" stroke-width="1.3"/><text x="177" y="474.4" font-size="8" fill="#e0e0e0" text-anchor="end" font-family="Liberation Sans">-5</text><line x1="185.5" y1="381" x2="185.5" y2="474" stroke="#000" stroke-width="1.5"/><line x1="263" y1="471" x2="263" y2="475" stroke="#000" stroke-width="1"/><line x1="341.5" y1="471" x2="341.5" y2="475" stroke="#000" stroke-width="1"/><line x1="420.3" y1="471" x2="420.3" y2="475" stroke="#000" stroke-width="1"/><line x1="499" y1="471" x2="499" y2="475" stroke="#000" stroke-width="1"/><path d="M200.5 416.4 C201.1 417.5 202.6 419.6 204.2 423.0 C205.8 426.4 207.8 432.7 210.0 437.0 C212.2 441.3 214.9 447.1 217.4 448.8 C219.9 450.5 221.2 447.4 225.0 447.0 C228.8 446.6 233.3 446.5 240.0 446.5 C246.7 446.5 258.9 446.3 265.0 446.8 C271.1 447.3 273.7 449.8 276.3 449.5 C278.9 449.2 278.6 448.4 280.8 445.0 C283.0 441.6 287.2 433.1 289.6 428.9 C292.1 424.7 293.9 421.8 295.5 420.0 C297.1 418.2 297.2 417.8 299.2 417.9 C301.2 418.0 300.5 420.1 307.3 420.8 C314.1 421.5 329.4 421.6 340.0 422.0 C350.6 422.4 362.3 424.6 370.9 423.0 C379.5 421.4 385.6 414.4 391.5 412.7 C397.4 411.0 401.4 412.3 406.3 412.7 C411.2 413.1 416.1 414.9 421.0 414.9 C425.9 414.9 430.3 412.8 435.7 412.7 C441.1 412.6 448.5 414.1 453.4 414.2 C458.3 414.2 460.5 412.9 465.2 413.0 C469.9 413.1 476.7 415.0 481.4 414.9 C486.1 414.8 489.8 413.2 493.2 412.4 C496.6 411.6 500.5 410.4 502.0 410.0" fill="none" stroke="#b82828" stroke-width="1.6"/><polyline points="200.5,466.5 501.3,466.8" fill="none" stroke="#22cc44" stroke-width="1.8"/><polyline points="200.5,466.5 206.4,382" fill="none" stroke="#40d8e0" stroke-width="1.5"/><polyline points="290.3,382 295.5,471.6" fill="none" stroke="#40d8e0" stroke-width="1.5"/><polyline points="308,471.6 310.2,465.6 380,465.6 388.6,464 395,465.6 420,466 440,465.6 480,465.3 501.3,466" fill="none" stroke="#40d8e0" stroke-width="1.5"/><text x="263" y="488" font-size="11" fill="#e0e0e0" text-anchor="middle" font-family="Liberation Sans">22:28:16</text><text x="341.5" y="488" font-size="11" fill="#e0e0e0" text-anchor="middle" font-family="Liberation Sans">22:28:18</text><text x="420.3" y="488" font-size="11" fill="#e0e0e0" text-anchor="middle" font-family="Liberation Sans">22:28:21</text><text x="499" y="488" font-size="11" fill="#e0e0e0" text-anchor="middle" font-family="Liberation Sans">22:28:23</text></svg>
<div class="chk" style="left:25px;top:478px;"></div>
<svg class="r" style="left:25px;top:478px" width="12" height="12"><path d="M2.5 6.2 L5 8.8 L9.8 3.2" stroke="#222" stroke-width="1.6" fill="none"/></svg>
<div class="t" style="left:44.4px;top:475.0px;font-size:16px;line-height:20px;color:#f0f0f0;">实时信号质量</div>
<svg class="r" style="left:150px;top:473.6px" width="20" height="20" viewBox="0 0 20 20"><circle cx="10" cy="10" r="8.9" fill="#f6f6f6" stroke="#0a0a0a" stroke-width="1.8"/><path d="M4.3 16 C6.5 12 8.3 8.5 10 6.6 C11.7 8.5 13.5 12 15.7 16" stroke="#0a0a0a" stroke-width="2.2" fill="none"/><path d="M5.8 2.6 C7.5 4.2 8.8 5.4 10 6.6 C11.2 5.4 12.5 4.2 14.2 2.6" stroke="#0a0a0a" stroke-width="2.2" fill="none"/><path d="M7.6 3.9 Q10 5.6 12.4 3.9" stroke="#0a0a0a" stroke-width="1.6" fill="none"/></svg>
<div class="r" style="left:539px;top:371px;width:124px;height:124px;border-radius:50%;background:#bff7f7;"></div>
<svg class="r" style="left:535px;top:400px" width="130" height="65" viewBox="0 0 1581 790"><path fill-rule="evenodd" d="M1040 187 H1330 C1430 187 1475 240 1475 320 C1475 390 1440 430 1390 445 C1440 470 1460 520 1470 628 H1330 C1325 530 1310 480 1240 480 H1210 V628 H1040 Z M1210 290 H1300 C1335 290 1350 310 1350 335 C1350 360 1335 380 1300 380 H1210 Z" fill="#050505"/><path fill-rule="evenodd" d="M621 187 H860 C1030 187 1140 280 1140 408 C1140 540 1030 628 860 628 H621 Z M790 275 H850 C935 275 975 330 975 410 C975 490 935 545 850 545 H790 Z" fill="#050505" stroke="#e6ece6" stroke-width="44" paint-order="stroke"/><path d="M132 187 L315 187 L394 297 L474 187 L659 187 L484 400 L666 628 L474 628 L392 511 L294 628 L112 628 L288 400 Z" fill="#050505" stroke="#e6ece6" stroke-width="40" paint-order="stroke"/></svg>
<div class="t" style="left:682.0px;top:372.1px;font-size:15px;line-height:19px;color:#c8c8c8;">中波/882/85/14/11/8/2/19:41:17/沈阳电台</div>
<div class="t" style="left:682.0px;top:392.0px;font-size:15px;line-height:19px;color:#c8c8c8;">短波/9555/60/4/11/8/0/20:34:37/中国之声-1</div>
<div class="t" style="left:682.0px;top:411.9px;font-size:15px;line-height:19px;color:#c8c8c8;">短波/9675/60/4/00/8/0/12:56:52/中国之声</div>
<div class="t" style="left:682.0px;top:431.8px;font-size:15px;line-height:19px;color:#c8c8c8;">调频/90100/70/8/00/67/0/13:00:52/抚顺音乐广播</div>
<div class="t" style="left:682.0px;top:451.7px;font-size:15px;line-height:19px;color:#c8c8c8;">调频/93000/70/8/00/67/0/13:01:14/抚顺新闻</div>
<div class="t" style="left:680.5px;top:475.0px;font-size:15px;line-height:19px;color:#c8c8c8;">&gt; 调谐频率: 15430 KHz</div>
<div class="r" style="left:1154px;top:371px;width:17px;height:100px;background:#f0f0f0;"></div>
<div class="r" style="left:1155px;top:388px;width:15px;height:17px;background:#cdcdcd;"></div>
<svg class="r" style="left:1157px;top:376px" width="10" height="8"><path d="M1 6 L5 2 L9 6" stroke="#555" stroke-width="1.3" fill="none"/></svg>
<svg class="r" style="left:1157px;top:458px" width="10" height="8"><path d="M1 2 L5 6 L9 2" stroke="#555" stroke-width="1.3" fill="none"/></svg>
<div class="chk" style="left:1058px;top:478px;"></div>
<svg class="r" style="left:1058px;top:478px" width="12" height="12"><path d="M2.5 6.2 L5 8.8 L9.8 3.2" stroke="#222" stroke-width="1.6" fill="none"/></svg>
<div class="t" style="left:1077.2px;top:475.0px;font-size:16px;line-height:20px;color:#d0d0d0;">定时自动换台</div>
<div class="r" style="left:13px;top:507px;width:1555px;height:363px;background:#e8e8e8;border:1px solid #707070;box-sizing:border-box;"></div>
<div class="r" style="left:17px;top:511px;width:1549px;height:176px;background:#c4c4c4;"></div>
<div class="r" style="left:17px;top:511px;width:1548px;height:176px;box-sizing:border-box;border:1px dotted #111;"></div>
<div class="r" style="left:17px;top:690px;width:1549px;height:176px;background:#c4c4c4;border:1px solid #6a6a6a;box-sizing:border-box;"></div>
<svg class="r" style="left:0px;top:511px" width="1566" height="176" viewBox="0 511 1566 176"><line x1="66" y1="552.5" x2="1525" y2="552.5" stroke="#000" stroke-width="1" stroke-dasharray="38.5 1"/><line x1="66" y1="569.5" x2="1525" y2="569.5" stroke="#000" stroke-width="1" stroke-dasharray="38.5 1"/><line x1="66" y1="587.5" x2="1525" y2="587.5" stroke="#000" stroke-width="1" stroke-dasharray="38.5 1"/><line x1="66" y1="604.5" x2="1525" y2="604.5" stroke="#000" stroke-width="1" stroke-dasharray="38.5 1"/><text x="63" y="540.3" font-size="13" fill="#111" text-anchor="end" font-family="Liberation Sans" textLength="12.5" lengthAdjust="spacingAndGlyphs">85</text><text x="63" y="557.4" font-size="13" fill="#111" text-anchor="end" font-family="Liberation Sans" textLength="12.5" lengthAdjust="spacingAndGlyphs">67</text><text x="63" y="574.5" font-size="13" fill="#111" text-anchor="end" font-family="Liberation Sans" textLength="12.5" lengthAdjust="spacingAndGlyphs">49</text><text x="63" y="591.5" font-size="13" fill="#111" text-anchor="end" font-family="Liberation Sans" textLength="12.5" lengthAdjust="spacingAndGlyphs">31</text><text x="63" y="608.6" font-size="13" fill="#111" text-anchor="end" font-family="Liberation Sans" textLength="12.5" lengthAdjust="spacingAndGlyphs">13</text><text x="63" y="625.7" font-size="13" fill="#111" text-anchor="end" font-family="Liberation Sans" textLength="11" lengthAdjust="spacingAndGlyphs">-5</text><line x1="65.8" y1="534.2" x2="65.8" y2="622.2" stroke="#000" stroke-width="1.6"/><rect x="66" y="616.4" width="4.5" height="4.8" fill="#3e80c0"/><text transform="translate(67.8,658) rotate(-90)" font-size="11" fill="#111" font-family="Liberation Sans" textLength="28.5" lengthAdjust="spacingAndGlyphs">15100</text><rect x="73.3" y="597.7" width="9.5" height="18.7" fill="#3e80c0"/><path d="M75.3 584.7 L78.0 581.3 L80.7 584.7" stroke="#1e1e1e" stroke-width="1.05" fill="none"/><text transform="translate(80.0,658) rotate(-90)" font-size="11" fill="#111" font-family="Liberation Sans" textLength="28.5" lengthAdjust="spacingAndGlyphs">15105</text><rect x="85.4" y="570.9" width="9.5" height="45.5" fill="#3e80c0"/><path d="M87.4 557.9 L90.1 554.5 L92.8 557.9" stroke="#1e1e1e" stroke-width="1.05" fill="none"/><text transform="translate(92.1,658) rotate(-90)" font-size="11" fill="#111" font-family="Liberation Sans" textLength="28.5" lengthAdjust="spacingAndGlyphs">15110</text><rect x="97.6" y="600.9" width="9.5" height="15.5" fill="#3e80c0"/><path d="M99.6 587.9 L102.3 584.5 L105.0 587.9" stroke="#1e1e1e" stroke-width="1.05" fill="none"/><text transform="translate(104.3,658) rotate(-90)" font-size="11" fill="#111" font-family="Liberation Sans" textLength="28.5" lengthAdjust="spacingAndGlyphs">15115</text><rect x="109.7" y="598.8" width="9.5" height="17.6" fill="#3e80c0"/><path d="M111.7 585.8 L114.4 582.4 L117.1 585.8" stroke="#1e1e1e" stroke-width="1.05" fill="none"/><text transform="translate(116.4,658) rotate(-90)" font-size="11" fill="#111" font-family="Liberation Sans" textLength="28.5" lengthAdjust="spacingAndGlyphs">15120</text><rect x="121.9" y="597.7" width="9.5" height="18.7" fill="#3e80c0"/><path d="M123.9 584.7 L126.6 581.3 L129.3 584.7" stroke="#1e1e1e" stroke-width="1.05" fill="none"/><text transform="translate(128.6,658) rotate(-90)" font-size="11" fill="#111" font-family="Liberation Sans" textLength="28.5" lengthAdjust="spacingAndGlyphs">15125</text><rect x="134.1" y="604.1" width="9.5" height="12.3" fill="#3e80c0"/><path d="M136.1 591.1 L138.8 587.7 L141.5 591.1" stroke="#1e1e1e" stroke-width="1.05" fill="none"/><text transform="translate(140.8,658) rotate(-90)" font-size="11" fill="#111" font-family="Liberation Sans" textLength="28.5" lengthAdjust="spacingAndGlyphs">15130</text><rect x="146.2" y="609.9" width="9.5" height="6.5" fill="#3e80c0"/><path d="M148.2 596.9 L150.9 593.5 L153.6 596.9" stroke="#1e1e1e" stroke-width="1.05" fill="none"/><text transform="translate(152.9,658) rotate(-90)" font-size="11" fill="#111" font-family="Liberation Sans" textLength="28.5" lengthAdjust="spacingAndGlyphs">15135</text><rect x="158.4" y="594.9" width="9.5" height="21.5" fill="#3e80c0"/><path d="M160.4 581.9 L163.1 578.5 L165.8 581.9" stroke="#1e1e1e" stroke-width="1.05" fill="none"/><text transform="translate(165.1,658) rotate(-90)" font-size="11" fill="#111" font-family="Liberation Sans" textLength="28.5" lengthAdjust="spacingAndGlyphs">15140</text><rect x="170.5" y="595.8" width="9.5" height="20.6" fill="#3e80c0"/><path d="M172.5 582.8 L175.2 579.4 L177.9 582.8" stroke="#1e1e1e" stroke-width="1.05" fill="none"/><text transform="translate(177.2,658) rotate(-90)" font-size="11" fill="#111" font-family="Liberation Sans" textLength="28.5" lengthAdjust="spacingAndGlyphs">15145</text><rect x="182.7" y="614.0" width="9.5" height="2.4" fill="#3e80c0"/><path d="M184.7 601.0 L187.4 597.6 L190.1 601.0" stroke="#1e1e1e" stroke-width="1.05" fill="none"/><text transform="translate(189.4,658) rotate(-90)" font-size="11" fill="#111" font-family="Liberation Sans" textLength="28.5" lengthAdjust="spacingAndGlyphs">15150</text><rect x="194.9" y="604.1" width="9.5" height="12.3" fill="#3e80c0"/><path d="M196.9 591.1 L199.6 587.7 L202.3 591.1" stroke="#1e1e1e" stroke-width="1.05" fill="none"/><text transform="translate(201.6,658) rotate(-90)" font-size="11" fill="#111" font-family="Liberation Sans" textLength="28.5" lengthAdjust="spacingAndGlyphs">15155</text><rect x="207.0" y="600.9" width="9.5" height="15.5" fill="#3e80c0"/><path d="M209.0 587.9 L211.7 584.5 L214.4 587.9" stroke="#1e1e1e" stroke-width="1.05" fill="none"/><text transform="translate(213.7,658) rotate(-90)" font-size="11" fill="#111" font-family="Liberation Sans" textLength="28.5" lengthAdjust="spacingAndGlyphs">15160</text><rect x="219.2" y="604.9" width="9.5" height="11.5" fill="#3e80c0"/><path d="M221.2 591.9 L223.9 588.5 L226.6 591.9" stroke="#1e1e1e" stroke-width="1.05" fill="none"/><text transform="translate(225.9,658) rotate(-90)" font-size="11" fill="#111" font-family="Liberation Sans" textLength="28.5" lengthAdjust="spacingAndGlyphs">15165</text><rect x="231.3" y="593.8" width="9.5" height="22.6" fill="#3e80c0"/><path d="M233.3 580.8 L236.0 577.4 L238.7 580.8" stroke="#1e1e1e" stroke-width="1.05" fill="none"/><text transform="translate(238.0,658) rotate(-90)" font-size="11" fill="#111" font-family="Liberation Sans" textLength="28.5" lengthAdjust="spacingAndGlyphs">15170</text><rect x="243.5" y="595.8" width="9.5" height="20.6" fill="#3e80c0"/><path d="M245.5 582.8 L248.2 579.4 L250.9 582.8" stroke="#1e1e1e" stroke-width="1.05" fill="none"/><text transform="translate(250.2,658) rotate(-90)" font-size="11" fill="#111" font-family="Liberation Sans" textLength="28.5" lengthAdjust="spacingAndGlyphs">15175</text><rect x="255.7" y="611.7" width="9.5" height="4.7" fill="#3e80c0"/><path d="M257.7 598.7 L260.4 595.3 L263.1 598.7" stroke="#1e1e1e" stroke-width="1.05" fill="none"/><text transform="translate(262.4,658) rotate(-90)" font-size="11" fill="#111" font-family="Liberation Sans" textLength="28.5" lengthAdjust="spacingAndGlyphs">15180</text><rect x="267.8" y="595.8" width="9.5" height="20.6" fill="#3e80c0"/><path d="M269.8 582.8 L272.5 579.4 L275.2 582.8" stroke="#1e1e1e" stroke-width="1.05" fill="none"/><text transform="translate(274.5,658) rotate(-90)" font-size="11" fill="#111" font-family="Liberation Sans" textLength="28.5" lengthAdjust="spacingAndGlyphs">15185</text><rect x="280.0" y="602.8" width="9.5" height="13.6" fill="#3e80c0"/><path d="M282.0 589.8 L284.7 586.4 L287.4 589.8" stroke="#1e1e1e" stroke-width="1.05" fill="none"/><text transform="translate(286.7,658) rotate(-90)" font-size="11" fill="#111" font-family="Liberation Sans" textLength="28.5" lengthAdjust="spacingAndGlyphs">15190</text><rect x="292.1" y="597.7" width="9.5" height="18.7" fill="#3e80c0"/><path d="M294.1 584.7 L296.8 581.3 L299.5 584.7" stroke="#1e1e1e" stroke-width="1.05" fill="none"/><text transform="translate(298.8,658) rotate(-90)" font-size="11" fill="#111" font-family="Liberation Sans" textLength="28.5" lengthAdjust="spacingAndGlyphs">15195</text><rect x="304.3" y="598.8" width="9.5" height="17.6" fill="#3e80c0"/><path d="M306.3 585.8 L309.0 582.4 L311.7 585.8" stroke="#1e1e1e" stroke-width="1.05" fill="none"/><text transform="translate(311.0,658) rotate(-90)" font-size="11" fill="#111" font-family="Liberation Sans" textLength="28.5" lengthAdjust="spacingAndGlyphs">15200</text><rect x="316.5" y="594.6" width="9.5" height="21.8" fill="#3e80c0"/><path d="M318.5 581.6 L321.2 578.2 L323.9 581.6" stroke="#1e1e1e" stroke-width="1.05" fill="none"/><text transform="translate(323.2,658) rotate(-90)" font-size="11" fill="#111" font-family="Liberation Sans" textLength="28.5" lengthAdjust="spacingAndGlyphs">15205</text><rect x="328.6" y="597.7" width="9.5" height="18.7" fill="#3e80c0"/><path d="M330.6 584.7 L333.3 581.3 L336.0 584.7" stroke="#1e1e1e" stroke-width="1.05" fill="none"/><text transform="translate(335.3,658) rotate(-90)" font-size="11" fill="#111" font-family="Liberation Sans" textLength="28.5" lengthAdjust="spacingAndGlyphs">15210</text><rect x="340.8" y="602.8" width="9.5" height="13.6" fill="#3e80c0"/><path d="M342.8 589.8 L345.5 586.4 L348.2 589.8" stroke="#1e1e1e" stroke-width="1.05" fill="none"/><text transform="translate(347.5,658) rotate(-90)" font-size="11" fill="#111" font-family="Liberation Sans" textLength="28.5" lengthAdjust="spacingAndGlyphs">15215</text><rect x="352.9" y="594.6" width="9.5" height="21.8" fill="#3e80c0"/><path d="M354.9 581.6 L357.6 578.2 L360.3 581.6" stroke="#1e1e1e" stroke-width="1.05" fill="none"/><text transform="translate(359.6,658) rotate(-90)" font-size="11" fill="#111" font-family="Liberation Sans" textLength="28.5" lengthAdjust="spacingAndGlyphs">15220</text><rect x="365.1" y="600.9" width="9.5" height="15.5" fill="#3e80c0"/><path d="M367.1 587.9 L369.8 584.5 L372.5 587.9" stroke="#1e1e1e" stroke-width="1.05" fill="none"/><text transform="translate(371.8,658) rotate(-90)" font-size="11" fill="#111" font-family="Liberation Sans" textLength="28.5" lengthAdjust="spacingAndGlyphs">15225</text><rect x="377.3" y="611.7" width="9.5" height="4.7" fill="#3e80c0"/><path d="M379.3 598.7 L382.0 595.3 L384.7 598.7" stroke="#1e1e1e" stroke-width="1.05" fill="none"/><text transform="translate(384.0,658) rotate(-90)" font-size="11" fill="#111" font-family="Liberation Sans" textLength="28.5" lengthAdjust="spacingAndGlyphs">15230</text><rect x="389.4" y="592.7" width="9.5" height="23.7" fill="#3e80c0"/><path d="M391.4 579.7 L394.1 576.3 L396.8 579.7" stroke="#1e1e1e" stroke-width="1.05" fill="none"/><text transform="translate(396.1,658) rotate(-90)" font-size="11" fill="#111" font-family="Liberation Sans" textLength="28.5" lengthAdjust="spacingAndGlyphs">15235</text><rect x="401.6" y="599.8" width="9.5" height="16.6" fill="#3e80c0"/><path d="M403.6 586.8 L406.3 583.4 L409.0 586.8" stroke="#1e1e1e" stroke-width="1.05" fill="none"/><text transform="translate(408.3,658) rotate(-90)" font-size="11" fill="#111" font-family="Liberation Sans" textLength="28.5" lengthAdjust="spacingAndGlyphs">15240</text><rect x="413.7" y="588.7" width="9.5" height="27.7" fill="#3e80c0"/><path d="M415.7 575.7 L418.4 572.3 L421.1 575.7" stroke="#1e1e1e" stroke-width="1.05" fill="none"/><text transform="translate(420.4,658) rotate(-90)" font-size="11" fill="#111" font-family="Liberation Sans" textLength="28.5" lengthAdjust="spacingAndGlyphs">15245</text><rect x="425.9" y="593.8" width="9.5" height="22.6" fill="#3e80c0"/><path d="M427.9 580.8 L430.6 577.4 L433.3 580.8" stroke="#1e1e1e" stroke-width="1.05" fill="none"/><text transform="translate(432.6,658) rotate(-90)" font-size="11" fill="#111" font-family="Liberation Sans" textLength="28.5" lengthAdjust="spacingAndGlyphs">15250</text><rect x="438.1" y="595.8" width="9.5" height="20.6" fill="#3e80c0"/><path d="M440.1 582.8 L442.8 579.4 L445.5 582.8" stroke="#1e1e1e" stroke-width="1.05" fill="none"/><text transform="translate(444.8,658) rotate(-90)" font-size="11" fill="#111" font-family="Liberation Sans" textLength="28.5" lengthAdjust="spacingAndGlyphs">15255</text><rect x="450.2" y="598.8" width="9.5" height="17.6" fill="#3e80c0"/><path d="M452.2 585.8 L454.9 582.4 L457.6 585.8" stroke="#1e1e1e" stroke-width="1.05" fill="none"/><text transform="translate(456.9,658) rotate(-90)" font-size="11" fill="#111" font-family="Liberation Sans" textLength="28.5" lengthAdjust="spacingAndGlyphs">15260</text><rect x="462.4" y="605.6" width="9.5" height="10.8" fill="#3e80c0"/><path d="M464.4 592.6 L467.1 589.2 L469.8 592.6" stroke="#1e1e1e" stroke-width="1.05" fill="none"/><text transform="translate(469.1,658) rotate(-90)" font-size="11" fill="#111" font-family="Liberation Sans" textLength="28.5" lengthAdjust="spacingAndGlyphs">15265</text><rect x="474.5" y="602.0" width="9.5" height="14.4" fill="#3e80c0"/><path d="M476.5 589.0 L479.2 585.6 L481.9 589.0" stroke="#1e1e1e" stroke-width="1.05" fill="none"/><text transform="translate(481.2,658) rotate(-90)" font-size="11" fill="#111" font-family="Liberation Sans" textLength="28.5" lengthAdjust="spacingAndGlyphs">15270</text><rect x="486.7" y="609.9" width="9.5" height="6.5" fill="#3e80c0"/><path d="M488.7 596.9 L491.4 593.5 L494.1 596.9" stroke="#1e1e1e" stroke-width="1.05" fill="none"/><text transform="translate(493.4,658) rotate(-90)" font-size="11" fill="#111" font-family="Liberation Sans" textLength="28.5" lengthAdjust="spacingAndGlyphs">15275</text><rect x="498.9" y="591.9" width="9.5" height="24.5" fill="#3e80c0"/><path d="M500.9 578.9 L503.6 575.5 L506.3 578.9" stroke="#1e1e1e" stroke-width="1.05" fill="none"/><text transform="translate(505.6,658) rotate(-90)" font-size="11" fill="#111" font-family="Liberation Sans" textLength="28.5" lengthAdjust="spacingAndGlyphs">15280</text><rect x="511.0" y="599.8" width="9.5" height="16.6" fill="#3e80c0"/><path d="M513.0 586.8 L515.7 583.4 L518.4 586.8" stroke="#1e1e1e" stroke-width="1.05" fill="none"/><text transform="translate(517.7,658) rotate(-90)" font-size="11" fill="#111" font-family="Liberation Sans" textLength="28.5" lengthAdjust="spacingAndGlyphs">15285</text><rect x="523.2" y="602.0" width="9.5" height="14.4" fill="#3e80c0"/><path d="M525.2 589.0 L527.9 585.6 L530.6 589.0" stroke="#1e1e1e" stroke-width="1.05" fill="none"/><text transform="translate(529.9,658) rotate(-90)" font-size="11" fill="#111" font-family="Liberation Sans" textLength="28.5" lengthAdjust="spacingAndGlyphs">15290</text><rect x="535.3" y="602.0" width="9.5" height="14.4" fill="#3e80c0"/><path d="M537.3 589.0 L540.0 585.6 L542.7 589.0" stroke="#1e1e1e" stroke-width="1.05" fill="none"/><text transform="translate(542.0,658) rotate(-90)" font-size="11" fill="#111" font-family="Liberation Sans" textLength="28.5" lengthAdjust="spacingAndGlyphs">15295</text><rect x="547.5" y="604.9" width="9.5" height="11.5" fill="#3e80c0"/><path d="M549.5 591.9 L552.2 588.5 L554.9 591.9" stroke="#1e1e1e" stroke-width="1.05" fill="none"/><text transform="translate(554.2,658) rotate(-90)" font-size="11" fill="#111" font-family="Liberation Sans" textLength="28.5" lengthAdjust="spacingAndGlyphs">15300</text><rect x="559.7" y="599.8" width="9.5" height="16.6" fill="#3e80c0"/><path d="M561.7 586.8 L564.4 583.4 L567.1 586.8" stroke="#1e1e1e" stroke-width="1.05" fill="none"/><text transform="translate(566.4,658) rotate(-90)" font-size="11" fill="#111" font-family="Liberation Sans" textLength="28.5" lengthAdjust="spacingAndGlyphs">15305</text><rect x="571.8" y="594.6" width="9.5" height="21.8" fill="#3e80c0"/><path d="M573.8 581.6 L576.5 578.2 L579.2 581.6" stroke="#1e1e1e" stroke-width="1.05" fill="none"/><text transform="translate(578.5,658) rotate(-90)" font-size="11" fill="#111" font-family="Liberation Sans" textLength="28.5" lengthAdjust="spacingAndGlyphs">15310</text><rect x="584.0" y="597.7" width="9.5" height="18.7" fill="#3e80c0"/><path d="M586.0 584.7 L588.7 581.3 L591.4 584.7" stroke="#1e1e1e" stroke-width="1.05" fill="none"/><text transform="translate(590.7,658) rotate(-90)" font-size="11" fill="#111" font-family="Liberation Sans" textLength="28.5" lengthAdjust="spacingAndGlyphs">15315</text><rect x="596.1" y="597.7" width="9.5" height="18.7" fill="#3e80c0"/><path d="M598.1 584.7 L600.8 581.3 L603.5 584.7" stroke="#1e1e1e" stroke-width="1.05" fill="none"/><text transform="translate(602.8,658) rotate(-90)" font-size="11" fill="#111" font-family="Liberation Sans" textLength="28.5" lengthAdjust="spacingAndGlyphs">15320</text><rect x="608.3" y="599.8" width="9.5" height="16.6" fill="#3e80c0"/><path d="M610.3 586.8 L613.0 583.4 L615.7 586.8" stroke="#1e1e1e" stroke-width="1.05" fill="none"/><text transform="translate(615.0,658) rotate(-90)" font-size="11" fill="#111" font-family="Liberation Sans" textLength="28.5" lengthAdjust="spacingAndGlyphs">15325</text><rect x="620.5" y="595.8" width="9.5" height="20.6" fill="#3e80c0"/><path d="M622.5 582.8 L625.2 579.4 L627.9 582.8" stroke="#1e1e1e" stroke-width="1.05" fill="none"/><text transform="translate(627.2,658) rotate(-90)" font-size="11" fill="#111" font-family="Liberation Sans" textLength="28.5" lengthAdjust="spacingAndGlyphs">15330</text><rect x="632.6" y="604.1" width="9.5" height="12.3" fill="#3e80c0"/><path d="M634.6 591.1 L637.3 587.7 L640.0 591.1" stroke="#1e1e1e" stroke-width="1.05" fill="none"/><text transform="translate(639.3,658) rotate(-90)" font-size="11" fill="#111" font-family="Liberation Sans" textLength="28.5" lengthAdjust="spacingAndGlyphs">15335</text><rect x="644.8" y="574.8" width="9.5" height="41.6" fill="#3e80c0"/><path d="M646.8 561.8 L649.5 558.4 L652.2 561.8" stroke="#1e1e1e" stroke-width="1.05" fill="none"/><text transform="translate(651.5,658) rotate(-90)" font-size="11" fill="#111" font-family="Liberation Sans" textLength="28.5" lengthAdjust="spacingAndGlyphs">15340</text><rect x="656.9" y="594.6" width="9.5" height="21.8" fill="#3e80c0"/><path d="M658.9 581.6 L661.6 578.2 L664.3 581.6" stroke="#1e1e1e" stroke-width="1.05" fill="none"/><text transform="translate(663.6,658) rotate(-90)" font-size="11" fill="#111" font-family="Liberation Sans" textLength="28.5" lengthAdjust="spacingAndGlyphs">15345</text><rect x="669.1" y="604.1" width="9.5" height="12.3" fill="#3e80c0"/><path d="M671.1 591.1 L673.8 587.7 L676.5 591.1" stroke="#1e1e1e" stroke-width="1.05" fill="none"/><text transform="translate(675.8,658) rotate(-90)" font-size="11" fill="#111" font-family="Liberation Sans" textLength="28.5" lengthAdjust="spacingAndGlyphs">15350</text><rect x="681.3" y="599.8" width="9.5" height="16.6" fill="#3e80c0"/><path d="M683.3 586.8 L686.0 583.4 L688.7 586.8" stroke="#1e1e1e" stroke-width="1.05" fill="none"/><text transform="translate(688.0,658) rotate(-90)" font-size="11" fill="#111" font-family="Liberation Sans" textLength="28.5" lengthAdjust="spacingAndGlyphs">15355</text><rect x="693.4" y="585.9" width="9.5" height="30.5" fill="#3e80c0"/><path d="M695.4 572.9 L698.1 569.5 L700.8 572.9" stroke="#1e1e1e" stroke-width="1.05" fill="none"/><text transform="translate(700.1,658) rotate(-90)" font-size="11" fill="#111" font-family="Liberation Sans" textLength="28.5" lengthAdjust="spacingAndGlyphs">15360</text><rect x="705.6" y="594.6" width="9.5" height="21.8" fill="#3e80c0"/><path d="M707.6 581.6 L710.3 578.2 L713.0 581.6" stroke="#1e1e1e" stroke-width="1.05" fill="none"/><text transform="translate(712.3,658) rotate(-90)" font-size="11" fill="#111" font-family="Liberation Sans" textLength="28.5" lengthAdjust="spacingAndGlyphs">15365</text><rect x="717.7" y="614.0" width="9.5" height="2.4" fill="#3e80c0"/><path d="M719.7 601.0 L722.4 597.6 L725.1 601.0" stroke="#1e1e1e" stroke-width="1.05" fill="none"/><text transform="translate(724.4,658) rotate(-90)" font-size="11" fill="#111" font-family="Liberation Sans" textLength="28.5" lengthAdjust="spacingAndGlyphs">15370</text><rect x="729.9" y="609.9" width="9.5" height="6.5" fill="#3e80c0"/><path d="M731.9 596.9 L734.6 593.5 L737.3 596.9" stroke="#1e1e1e" stroke-width="1.05" fill="none"/><text transform="translate(736.6,658) rotate(-90)" font-size="11" fill="#111" font-family="Liberation Sans" textLength="28.5" lengthAdjust="spacingAndGlyphs">15375</text><rect x="742.1" y="602.0" width="9.5" height="14.4" fill="#3e80c0"/><path d="M744.1 589.0 L746.8 585.6 L749.5 589.0" stroke="#1e1e1e" stroke-width="1.05" fill="none"/><text transform="translate(748.8,658) rotate(-90)" font-size="11" fill="#111" font-family="Liberation Sans" textLength="28.5" lengthAdjust="spacingAndGlyphs">15380</text><rect x="754.2" y="604.9" width="9.5" height="11.5" fill="#3e80c0"/><path d="M756.2 591.9 L758.9 588.5 L761.6 591.9" stroke="#1e1e1e" stroke-width="1.05" fill="none"/><text transform="translate(760.9,658) rotate(-90)" font-size="11" fill="#111" font-family="Liberation Sans" textLength="28.5" lengthAdjust="spacingAndGlyphs">15385</text><rect x="766.4" y="591.1" width="9.5" height="25.3" fill="#3e80c0"/><path d="M768.4 578.1 L771.1 574.7 L773.8 578.1" stroke="#1e1e1e" stroke-width="1.05" fill="none"/><text transform="translate(773.1,658) rotate(-90)" font-size="11" fill="#111" font-family="Liberation Sans" textLength="28.5" lengthAdjust="spacingAndGlyphs">15390</text><rect x="778.5" y="598.8" width="9.5" height="17.6" fill="#3e80c0"/><path d="M780.5 585.8 L783.2 582.4 L785.9 585.8" stroke="#1e1e1e" stroke-width="1.05" fill="none"/><text transform="translate(785.2,658) rotate(-90)" font-size="11" fill="#111" font-family="Liberation Sans" textLength="28.5" lengthAdjust="spacingAndGlyphs">15395</text><rect x="790.7" y="606.0" width="9.5" height="10.4" fill="#3e80c0"/><path d="M792.7 593.0 L795.4 589.6 L798.1 593.0" stroke="#1e1e1e" stroke-width="1.05" fill="none"/><text transform="translate(797.4,658) rotate(-90)" font-size="11" fill="#111" font-family="Liberation Sans" textLength="28.5" lengthAdjust="spacingAndGlyphs">15400</text><rect x="802.9" y="593.8" width="9.5" height="22.6" fill="#3e80c0"/><path d="M804.9 580.8 L807.6 577.4 L810.3 580.8" stroke="#1e1e1e" stroke-width="1.05" fill="none"/><text transform="translate(809.6,658) rotate(-90)" font-size="11" fill="#111" font-family="Liberation Sans" textLength="28.5" lengthAdjust="spacingAndGlyphs">15405</text><rect x="815.0" y="608.8" width="9.5" height="7.6" fill="#3e80c0"/><path d="M817.0 595.8 L819.7 592.4 L822.4 595.8" stroke="#1e1e1e" stroke-width="1.05" fill="none"/><text transform="translate(821.7,658) rotate(-90)" font-size="11" fill="#111" font-family="Liberation Sans" textLength="28.5" lengthAdjust="spacingAndGlyphs">15410</text><rect x="827.2" y="597.7" width="9.5" height="18.7" fill="#3e80c0"/><path d="M829.2 584.7 L831.9 581.3 L834.6 584.7" stroke="#1e1e1e" stroke-width="1.05" fill="none"/><text transform="translate(833.9,658) rotate(-90)" font-size="11" fill="#111" font-family="Liberation Sans" textLength="28.5" lengthAdjust="spacingAndGlyphs">15415</text><rect x="839.3" y="594.9" width="9.5" height="21.5" fill="#3e80c0"/><path d="M841.3 581.9 L844.0 578.5 L846.7 581.9" stroke="#1e1e1e" stroke-width="1.05" fill="none"/><text transform="translate(846.0,658) rotate(-90)" font-size="11" fill="#111" font-family="Liberation Sans" textLength="28.5" lengthAdjust="spacingAndGlyphs">15420</text><rect x="851.5" y="595.8" width="9.5" height="20.6" fill="#3e80c0"/><path d="M853.5 582.8 L856.2 579.4 L858.9 582.8" stroke="#1e1e1e" stroke-width="1.05" fill="none"/><text transform="translate(858.2,658) rotate(-90)" font-size="11" fill="#111" font-family="Liberation Sans" textLength="28.5" lengthAdjust="spacingAndGlyphs">15425</text><rect x="863.7" y="559.8" width="9.5" height="56.6" fill="#3e80c0"/><path d="M865.7 546.8 L868.4 543.4 L871.1 546.8" stroke="#1e1e1e" stroke-width="1.05" fill="none"/><text transform="translate(870.4,658) rotate(-90)" font-size="11" fill="#111" font-family="Liberation Sans" textLength="28.5" lengthAdjust="spacingAndGlyphs">15430</text><rect x="875.8" y="591.9" width="9.5" height="24.5" fill="#3e80c0"/><path d="M877.8 578.9 L880.5 575.5 L883.2 578.9" stroke="#1e1e1e" stroke-width="1.05" fill="none"/><text transform="translate(882.5,658) rotate(-90)" font-size="11" fill="#111" font-family="Liberation Sans" textLength="28.5" lengthAdjust="spacingAndGlyphs">15435</text><rect x="888.0" y="565.8" width="9.5" height="50.6" fill="#3e80c0"/><path d="M890.0 552.8 L892.7 549.4 L895.4 552.8" stroke="#1e1e1e" stroke-width="1.05" fill="none"/><text transform="translate(894.7,658) rotate(-90)" font-size="11" fill="#111" font-family="Liberation Sans" textLength="28.5" lengthAdjust="spacingAndGlyphs">15440</text><rect x="900.1" y="586.7" width="9.5" height="29.7" fill="#3e80c0"/><path d="M902.1 573.7 L904.8 570.3 L907.5 573.7" stroke="#1e1e1e" stroke-width="1.05" fill="none"/><text transform="translate(906.8,658) rotate(-90)" font-size="11" fill="#111" font-family="Liberation Sans" textLength="28.5" lengthAdjust="spacingAndGlyphs">15445</text><rect x="912.3" y="591.9" width="9.5" height="24.5" fill="#3e80c0"/><path d="M914.3 578.9 L917.0 575.5 L919.7 578.9" stroke="#1e1e1e" stroke-width="1.05" fill="none"/><text transform="translate(919.0,658) rotate(-90)" font-size="11" fill="#111" font-family="Liberation Sans" textLength="28.5" lengthAdjust="spacingAndGlyphs">15450</text><rect x="924.5" y="590.9" width="9.5" height="25.5" fill="#3e80c0"/><path d="M926.5 577.9 L929.2 574.5 L931.9 577.9" stroke="#1e1e1e" stroke-width="1.05" fill="none"/><text transform="translate(931.2,658) rotate(-90)" font-size="11" fill="#111" font-family="Liberation Sans" textLength="28.5" lengthAdjust="spacingAndGlyphs">15455</text><rect x="936.6" y="593.0" width="9.5" height="23.4" fill="#3e80c0"/><path d="M938.6 580.0 L941.3 576.6 L944.0 580.0" stroke="#1e1e1e" stroke-width="1.05" fill="none"/><text transform="translate(943.3,658) rotate(-90)" font-size="11" fill="#111" font-family="Liberation Sans" textLength="28.5" lengthAdjust="spacingAndGlyphs">15460</text><rect x="948.8" y="599.8" width="9.5" height="16.6" fill="#3e80c0"/><path d="M950.8 586.8 L953.5 583.4 L956.2 586.8" stroke="#1e1e1e" stroke-width="1.05" fill="none"/><text transform="translate(955.5,658) rotate(-90)" font-size="11" fill="#111" font-family="Liberation Sans" textLength="28.5" lengthAdjust="spacingAndGlyphs">15465</text><rect x="960.9" y="602.0" width="9.5" height="14.4" fill="#3e80c0"/><path d="M962.9 589.0 L965.6 585.6 L968.3 589.0" stroke="#1e1e1e" stroke-width="1.05" fill="none"/><text transform="translate(967.6,658) rotate(-90)" font-size="11" fill="#111" font-family="Liberation Sans" textLength="28.5" lengthAdjust="spacingAndGlyphs">15470</text><rect x="973.1" y="587.9" width="9.5" height="28.5" fill="#3e80c0"/><path d="M975.1 574.9 L977.8 571.5 L980.5 574.9" stroke="#1e1e1e" stroke-width="1.05" fill="none"/><text transform="translate(979.8,658) rotate(-90)" font-size="11" fill="#111" font-family="Liberation Sans" textLength="28.5" lengthAdjust="spacingAndGlyphs">15475</text><rect x="985.3" y="589.8" width="9.5" height="26.6" fill="#3e80c0"/><path d="M987.3 576.8 L990.0 573.4 L992.7 576.8" stroke="#1e1e1e" stroke-width="1.05" fill="none"/><text transform="translate(992.0,658) rotate(-90)" font-size="11" fill="#111" font-family="Liberation Sans" textLength="28.5" lengthAdjust="spacingAndGlyphs">15480</text><rect x="997.4" y="590.9" width="9.5" height="25.5" fill="#3e80c0"/><path d="M999.4 577.9 L1002.1 574.5 L1004.8 577.9" stroke="#1e1e1e" stroke-width="1.05" fill="none"/><text transform="translate(1004.1,658) rotate(-90)" font-size="11" fill="#111" font-family="Liberation Sans" textLength="28.5" lengthAdjust="spacingAndGlyphs">15485</text><rect x="1009.6" y="594.9" width="9.5" height="21.5" fill="#3e80c0"/><path d="M1011.6 581.9 L1014.3 578.5 L1017.0 581.9" stroke="#1e1e1e" stroke-width="1.05" fill="none"/><text transform="translate(1016.3,658) rotate(-90)" font-size="11" fill="#111" font-family="Liberation Sans" textLength="28.5" lengthAdjust="spacingAndGlyphs">15490</text><rect x="1021.7" y="604.9" width="9.5" height="11.5" fill="#3e80c0"/><path d="M1023.7 591.9 L1026.4 588.5 L1029.1 591.9" stroke="#1e1e1e" stroke-width="1.05" fill="none"/><text transform="translate(1028.4,658) rotate(-90)" font-size="11" fill="#111" font-family="Liberation Sans" textLength="28.5" lengthAdjust="spacingAndGlyphs">15495</text><rect x="1033.9" y="609.9" width="9.5" height="6.5" fill="#3e80c0"/><path d="M1035.9 596.9 L1038.6 593.5 L1041.3 596.9" stroke="#1e1e1e" stroke-width="1.05" fill="none"/><text transform="translate(1040.6,658) rotate(-90)" font-size="11" fill="#111" font-family="Liberation Sans" textLength="28.5" lengthAdjust="spacingAndGlyphs">15500</text><rect x="1046.1" y="596.9" width="9.5" height="19.5" fill="#3e80c0"/><path d="M1048.1 583.9 L1050.8 580.5 L1053.5 583.9" stroke="#1e1e1e" stroke-width="1.05" fill="none"/><text transform="translate(1052.8,658) rotate(-90)" font-size="11" fill="#111" font-family="Liberation Sans" textLength="28.5" lengthAdjust="spacingAndGlyphs">15505</text><rect x="1058.2" y="594.9" width="9.5" height="21.5" fill="#3e80c0"/><path d="M1060.2 581.9 L1062.9 578.5 L1065.6 581.9" stroke="#1e1e1e" stroke-width="1.05" fill="none"/><text transform="translate(1064.9,658) rotate(-90)" font-size="11" fill="#111" font-family="Liberation Sans" textLength="28.5" lengthAdjust="spacingAndGlyphs">15510</text><rect x="1070.4" y="596.9" width="9.5" height="19.5" fill="#3e80c0"/><path d="M1072.4 583.9 L1075.1 580.5 L1077.8 583.9" stroke="#1e1e1e" stroke-width="1.05" fill="none"/><text transform="translate(1077.1,658) rotate(-90)" font-size="11" fill="#111" font-family="Liberation Sans" textLength="28.5" lengthAdjust="spacingAndGlyphs">15515</text><rect x="1082.5" y="604.1" width="9.5" height="12.3" fill="#3e80c0"/><path d="M1084.5 591.1 L1087.2 587.7 L1089.9 591.1" stroke="#1e1e1e" stroke-width="1.05" fill="none"/><text transform="translate(1089.2,658) rotate(-90)" font-size="11" fill="#111" font-family="Liberation Sans" textLength="28.5" lengthAdjust="spacingAndGlyphs">15520</text><rect x="1094.7" y="595.8" width="9.5" height="20.6" fill="#3e80c0"/><path d="M1096.7 582.8 L1099.4 579.4 L1102.1 582.8" stroke="#1e1e1e" stroke-width="1.05" fill="none"/><text transform="translate(1101.4,658) rotate(-90)" font-size="11" fill="#111" font-family="Liberation Sans" textLength="28.5" lengthAdjust="spacingAndGlyphs">15525</text><rect x="1106.9" y="597.7" width="9.5" height="18.7" fill="#3e80c0"/><path d="M1108.9 584.7 L1111.6 581.3 L1114.3 584.7" stroke="#1e1e1e" stroke-width="1.05" fill="none"/><text transform="translate(1113.6,658) rotate(-90)" font-size="11" fill="#111" font-family="Liberation Sans" textLength="28.5" lengthAdjust="spacingAndGlyphs">15530</text><rect x="1119.0" y="606.8" width="9.5" height="9.6" fill="#3e80c0"/><path d="M1121.0 593.8 L1123.7 590.4 L1126.4 593.8" stroke="#1e1e1e" stroke-width="1.05" fill="none"/><text transform="translate(1125.7,658) rotate(-90)" font-size="11" fill="#111" font-family="Liberation Sans" textLength="28.5" lengthAdjust="spacingAndGlyphs">15535</text><rect x="1131.2" y="612.8" width="9.5" height="3.6" fill="#3e80c0"/><path d="M1133.2 599.8 L1135.9 596.4 L1138.6 599.8" stroke="#1e1e1e" stroke-width="1.05" fill="none"/><text transform="translate(1137.9,658) rotate(-90)" font-size="11" fill="#111" font-family="Liberation Sans" textLength="28.5" lengthAdjust="spacingAndGlyphs">15540</text><rect x="1143.3" y="606.8" width="9.5" height="9.6" fill="#3e80c0"/><path d="M1145.3 593.8 L1148.0 590.4 L1150.7 593.8" stroke="#1e1e1e" stroke-width="1.05" fill="none"/><text transform="translate(1150.0,658) rotate(-90)" font-size="11" fill="#111" font-family="Liberation Sans" textLength="28.5" lengthAdjust="spacingAndGlyphs">15545</text><rect x="1155.5" y="595.8" width="9.5" height="20.6" fill="#3e80c0"/><path d="M1157.5 582.8 L1160.2 579.4 L1162.9 582.8" stroke="#1e1e1e" stroke-width="1.05" fill="none"/><text transform="translate(1162.2,658) rotate(-90)" font-size="11" fill="#111" font-family="Liberation Sans" textLength="28.5" lengthAdjust="spacingAndGlyphs">15550</text><rect x="1167.7" y="596.9" width="9.5" height="19.5" fill="#3e80c0"/><path d="M1169.7 583.9 L1172.4 580.5 L1175.1 583.9" stroke="#1e1e1e" stroke-width="1.05" fill="none"/><text transform="translate(1174.4,658) rotate(-90)" font-size="11" fill="#111" font-family="Liberation Sans" textLength="28.5" lengthAdjust="spacingAndGlyphs">15555</text><rect x="1179.8" y="602.0" width="9.5" height="14.4" fill="#3e80c0"/><path d="M1181.8 589.0 L1184.5 585.6 L1187.2 589.0" stroke="#1e1e1e" stroke-width="1.05" fill="none"/><text transform="translate(1186.5,658) rotate(-90)" font-size="11" fill="#111" font-family="Liberation Sans" textLength="28.5" lengthAdjust="spacingAndGlyphs">15560</text><rect x="1192.0" y="594.9" width="9.5" height="21.5" fill="#3e80c0"/><path d="M1194.0 581.9 L1196.7 578.5 L1199.4 581.9" stroke="#1e1e1e" stroke-width="1.05" fill="none"/><text transform="translate(1198.7,658) rotate(-90)" font-size="11" fill="#111" font-family="Liberation Sans" textLength="28.5" lengthAdjust="spacingAndGlyphs">15565</text><rect x="1204.1" y="606.8" width="9.5" height="9.6" fill="#3e80c0"/><path d="M1206.1 593.8 L1208.8 590.4 L1211.5 593.8" stroke="#1e1e1e" stroke-width="1.05" fill="none"/><text transform="translate(1210.8,658) rotate(-90)" font-size="11" fill="#111" font-family="Liberation Sans" textLength="28.5" lengthAdjust="spacingAndGlyphs">15570</text><rect x="1216.3" y="595.8" width="9.5" height="20.6" fill="#3e80c0"/><path d="M1218.3 582.8 L1221.0 579.4 L1223.7 582.8" stroke="#1e1e1e" stroke-width="1.05" fill="none"/><text transform="translate(1223.0,658) rotate(-90)" font-size="11" fill="#111" font-family="Liberation Sans" textLength="28.5" lengthAdjust="spacingAndGlyphs">15575</text><rect x="1228.5" y="597.7" width="9.5" height="18.7" fill="#3e80c0"/><path d="M1230.5 584.7 L1233.2 581.3 L1235.9 584.7" stroke="#1e1e1e" stroke-width="1.05" fill="none"/><text transform="translate(1235.2,658) rotate(-90)" font-size="11" fill="#111" font-family="Liberation Sans" textLength="28.5" lengthAdjust="spacingAndGlyphs">15580</text><rect x="1240.6" y="611.7" width="9.5" height="4.7" fill="#3e80c0"/><path d="M1242.6 598.7 L1245.3 595.3 L1248.0 598.7" stroke="#1e1e1e" stroke-width="1.05" fill="none"/><text transform="translate(1247.3,658) rotate(-90)" font-size="11" fill="#111" font-family="Liberation Sans" textLength="28.5" lengthAdjust="spacingAndGlyphs">15585</text><rect x="1252.8" y="583.8" width="9.5" height="32.6" fill="#3e80c0"/><path d="M1254.8 570.8 L1257.5 567.4 L1260.2 570.8" stroke="#1e1e1e" stroke-width="1.05" fill="none"/><text transform="translate(1259.5,658) rotate(-90)" font-size="11" fill="#111" font-family="Liberation Sans" textLength="28.5" lengthAdjust="spacingAndGlyphs">15590</text><rect x="1264.9" y="608.7" width="9.5" height="7.7" fill="#3e80c0"/><path d="M1266.9 595.7 L1269.6 592.3 L1272.3 595.7" stroke="#1e1e1e" stroke-width="1.05" fill="none"/><text transform="translate(1271.6,658) rotate(-90)" font-size="11" fill="#111" font-family="Liberation Sans" textLength="28.5" lengthAdjust="spacingAndGlyphs">15595</text><rect x="1277.1" y="603.0" width="9.5" height="13.4" fill="#3e80c0"/><path d="M1279.1 590.0 L1281.8 586.6 L1284.5 590.0" stroke="#1e1e1e" stroke-width="1.05" fill="none"/><text transform="translate(1283.8,658) rotate(-90)" font-size="11" fill="#111" font-family="Liberation Sans" textLength="28.5" lengthAdjust="spacingAndGlyphs">15600</text><rect x="1289.3" y="601.0" width="9.5" height="15.4" fill="#3e80c0"/><path d="M1291.3 588.0 L1294.0 584.6 L1296.7 588.0" stroke="#1e1e1e" stroke-width="1.05" fill="none"/><text transform="translate(1296.0,658) rotate(-90)" font-size="11" fill="#111" font-family="Liberation Sans" textLength="28.5" lengthAdjust="spacingAndGlyphs">15605</text><rect x="1301.4" y="595.9" width="9.5" height="20.5" fill="#3e80c0"/><path d="M1303.4 582.9 L1306.1 579.5 L1308.8 582.9" stroke="#1e1e1e" stroke-width="1.05" fill="none"/><text transform="translate(1308.1,658) rotate(-90)" font-size="11" fill="#111" font-family="Liberation Sans" textLength="28.5" lengthAdjust="spacingAndGlyphs">15610</text><rect x="1313.6" y="604.9" width="9.5" height="11.5" fill="#3e80c0"/><path d="M1315.6 591.9 L1318.3 588.5 L1321.0 591.9" stroke="#1e1e1e" stroke-width="1.05" fill="none"/><text transform="translate(1320.3,658) rotate(-90)" font-size="11" fill="#111" font-family="Liberation Sans" textLength="28.5" lengthAdjust="spacingAndGlyphs">15615</text><rect x="1325.7" y="603.9" width="9.5" height="12.5" fill="#3e80c0"/><path d="M1327.7 590.9 L1330.4 587.5 L1333.1 590.9" stroke="#1e1e1e" stroke-width="1.05" fill="none"/><text transform="translate(1332.4,658) rotate(-90)" font-size="11" fill="#111" font-family="Liberation Sans" textLength="28.5" lengthAdjust="spacingAndGlyphs">15620</text><rect x="1337.9" y="607.0" width="9.5" height="9.4" fill="#3e80c0"/><path d="M1339.9 594.0 L1342.6 590.6 L1345.3 594.0" stroke="#1e1e1e" stroke-width="1.05" fill="none"/><text transform="translate(1344.6,658) rotate(-90)" font-size="11" fill="#111" font-family="Liberation Sans" textLength="28.5" lengthAdjust="spacingAndGlyphs">15625</text><rect x="1350.1" y="597.1" width="9.5" height="19.3" fill="#3e80c0"/><path d="M1352.1 584.1 L1354.8 580.7 L1357.5 584.1" stroke="#1e1e1e" stroke-width="1.05" fill="none"/><text transform="translate(1356.8,658) rotate(-90)" font-size="11" fill="#111" font-family="Liberation Sans" textLength="28.5" lengthAdjust="spacingAndGlyphs">15630</text><rect x="1362.2" y="597.1" width="9.5" height="19.3" fill="#3e80c0"/><path d="M1364.2 584.1 L1366.9 580.7 L1369.6 584.1" stroke="#1e1e1e" stroke-width="1.05" fill="none"/><text transform="translate(1368.9,658) rotate(-90)" font-size="11" fill="#111" font-family="Liberation Sans" textLength="28.5" lengthAdjust="spacingAndGlyphs">15635</text><rect x="1374.4" y="602.2" width="9.5" height="14.2" fill="#3e80c0"/><path d="M1376.4 589.2 L1379.1 585.8 L1381.8 589.2" stroke="#1e1e1e" stroke-width="1.05" fill="none"/><text transform="translate(1381.1,658) rotate(-90)" font-size="11" fill="#111" font-family="Liberation Sans" textLength="28.5" lengthAdjust="spacingAndGlyphs">15640</text><rect x="1386.5" y="595.0" width="9.5" height="21.4" fill="#3e80c0"/><path d="M1388.5 582.0 L1391.2 578.6 L1393.9 582.0" stroke="#1e1e1e" stroke-width="1.05" fill="none"/><text transform="translate(1393.2,658) rotate(-90)" font-size="11" fill="#111" font-family="Liberation Sans" textLength="28.5" lengthAdjust="spacingAndGlyphs">15645</text><rect x="1398.7" y="595.0" width="9.5" height="21.4" fill="#3e80c0"/><path d="M1400.7 582.0 L1403.4 578.6 L1406.1 582.0" stroke="#1e1e1e" stroke-width="1.05" fill="none"/><text transform="translate(1405.4,658) rotate(-90)" font-size="11" fill="#111" font-family="Liberation Sans" textLength="28.5" lengthAdjust="spacingAndGlyphs">15650</text><rect x="1410.9" y="594.2" width="9.5" height="22.2" fill="#3e80c0"/><path d="M1412.9 581.2 L1415.6 577.8 L1418.3 581.2" stroke="#1e1e1e" stroke-width="1.05" fill="none"/><text transform="translate(1417.6,658) rotate(-90)" font-size="11" fill="#111" font-family="Liberation Sans" textLength="28.5" lengthAdjust="spacingAndGlyphs">15655</text><rect x="1423.0" y="608.2" width="9.5" height="8.2" fill="#3e80c0"/><path d="M1425.0 595.2 L1427.7 591.8 L1430.4 595.2" stroke="#1e1e1e" stroke-width="1.05" fill="none"/><text transform="translate(1429.7,658) rotate(-90)" font-size="11" fill="#111" font-family="Liberation Sans" textLength="28.5" lengthAdjust="spacingAndGlyphs">15660</text><rect x="1435.2" y="597.1" width="9.5" height="19.3" fill="#3e80c0"/><path d="M1437.2 584.1 L1439.9 580.7 L1442.6 584.1" stroke="#1e1e1e" stroke-width="1.05" fill="none"/><text transform="translate(1441.9,658) rotate(-90)" font-size="11" fill="#111" font-family="Liberation Sans" textLength="28.5" lengthAdjust="spacingAndGlyphs">15665</text><rect x="1447.3" y="604.9" width="9.5" height="11.5" fill="#3e80c0"/><path d="M1449.3 591.9 L1452.0 588.5 L1454.7 591.9" stroke="#1e1e1e" stroke-width="1.05" fill="none"/><text transform="translate(1454.0,658) rotate(-90)" font-size="11" fill="#111" font-family="Liberation Sans" textLength="28.5" lengthAdjust="spacingAndGlyphs">15670</text><rect x="1459.5" y="600.1" width="9.5" height="16.3" fill="#3e80c0"/><path d="M1461.5 587.1 L1464.2 583.7 L1466.9 587.1" stroke="#1e1e1e" stroke-width="1.05" fill="none"/><text transform="translate(1466.2,658) rotate(-90)" font-size="11" fill="#111" font-family="Liberation Sans" textLength="28.5" lengthAdjust="spacingAndGlyphs">15675</text><rect x="1471.7" y="589.0" width="9.5" height="27.4" fill="#3e80c0"/><path d="M1473.7 576.0 L1476.4 572.6 L1479.1 576.0" stroke="#1e1e1e" stroke-width="1.05" fill="none"/><text transform="translate(1478.4,658) rotate(-90)" font-size="11" fill="#111" font-family="Liberation Sans" textLength="28.5" lengthAdjust="spacingAndGlyphs">15680</text><rect x="1483.8" y="585.6" width="9.5" height="30.8" fill="#3e80c0"/><path d="M1485.8 572.6 L1488.5 569.2 L1491.2 572.6" stroke="#1e1e1e" stroke-width="1.05" fill="none"/><text transform="translate(1490.5,658) rotate(-90)" font-size="11" fill="#111" font-family="Liberation Sans" textLength="28.5" lengthAdjust="spacingAndGlyphs">15685</text><rect x="1496.0" y="595.0" width="9.5" height="21.4" fill="#3e80c0"/><path d="M1498.0 582.0 L1500.7 578.6 L1503.4 582.0" stroke="#1e1e1e" stroke-width="1.05" fill="none"/><text transform="translate(1502.7,658) rotate(-90)" font-size="11" fill="#111" font-family="Liberation Sans" textLength="28.5" lengthAdjust="spacingAndGlyphs">15690</text><rect x="1508.1" y="598.1" width="9.5" height="18.3" fill="#3e80c0"/><path d="M1510.1 585.1 L1512.8 581.7 L1515.5 585.1" stroke="#1e1e1e" stroke-width="1.05" fill="none"/><text transform="translate(1514.8,658) rotate(-90)" font-size="11" fill="#111" font-family="Liberation Sans" textLength="28.5" lengthAdjust="spacingAndGlyphs">15695</text><rect x="1520.3" y="597.1" width="5" height="19.3" fill="#3e80c0"/><text transform="translate(1527.0,658) rotate(-90)" font-size="11" fill="#111" font-family="Liberation Sans" textLength="28.5" lengthAdjust="spacingAndGlyphs">15700</text><line x1="65" y1="621.2" x2="1526" y2="621.2" stroke="#000" stroke-width="1.6"/><line x1="868.6" y1="533.7" x2="868.6" y2="621.5" stroke="#c81e32" stroke-width="1.4"/><path d="M865.9 546.8 L868.6 543.4 L871.3 546.8" stroke="#1e1e1e" stroke-width="1.05" fill="none"/><text x="795" y="672.5" font-size="12" fill="#111" text-anchor="middle" font-family="Liberation Sans">频率 Khz</text></svg>
<svg class="r" style="left:0px;top:690px" width="1566" height="176" viewBox="0 690 1566 176"><line x1="66" y1="731.5" x2="1525" y2="731.5" stroke="#000" stroke-width="1" stroke-dasharray="38.5 1"/><line x1="66" y1="748.5" x2="1525" y2="748.5" stroke="#000" stroke-width="1" stroke-dasharray="38.5 1"/><line x1="66" y1="766.5" x2="1525" y2="766.5" stroke="#000" stroke-width="1" stroke-dasharray="38.5 1"/><line x1="66" y1="783.5" x2="1525" y2="783.5" stroke="#000" stroke-width="1" stroke-dasharray="38.5 1"/><text x="63" y="719.3" font-size="13" fill="#111" text-anchor="end" font-family="Liberation Sans" textLength="12.5" lengthAdjust="spacingAndGlyphs">85</text><text x="63" y="736.4" font-size="13" fill="#111" text-anchor="end" font-family="Liberation Sans" textLength="12.5" lengthAdjust="spacingAndGlyphs">67</text><text x="63" y="753.5" font-size="13" fill="#111" text-anchor="end" font-family="Liberation Sans" textLength="12.5" lengthAdjust="spacingAndGlyphs">49</text><text x="63" y="770.5" font-size="13" fill="#111" text-anchor="end" font-family="Liberation Sans" textLength="12.5" lengthAdjust="spacingAndGlyphs">31</text><text x="63" y="787.6" font-size="13" fill="#111" text-anchor="end" font-family="Liberation Sans" textLength="12.5" lengthAdjust="spacingAndGlyphs">13</text><text x="63" y="804.7" font-size="13" fill="#111" text-anchor="end" font-family="Liberation Sans" textLength="11" lengthAdjust="spacingAndGlyphs">-5</text><line x1="65.8" y1="713.2" x2="65.8" y2="801.2" stroke="#000" stroke-width="1.6"/><rect x="66" y="776.2" width="4.5" height="19.2" fill="#3e80c0"/><text x="67.8" y="768.2" font-size="11" fill="#222" text-anchor="middle" font-family="Liberation Sans"></text><text transform="translate(67.8,837) rotate(-90)" font-size="11" fill="#111" font-family="Liberation Sans" textLength="28.5" lengthAdjust="spacingAndGlyphs">15700</text><rect x="73.3" y="773.8" width="9.5" height="21.6" fill="#3e80c0"/><path d="M75.3 760.8 L78.0 757.4 L80.7 760.8" stroke="#1e1e1e" stroke-width="1.05" fill="none"/><text transform="translate(80.0,837) rotate(-90)" font-size="11" fill="#111" font-family="Liberation Sans" textLength="28.5" lengthAdjust="spacingAndGlyphs">15705</text><rect x="85.4" y="779.8" width="9.5" height="15.6" fill="#3e80c0"/><path d="M87.4 766.8 L90.1 763.4 L92.8 766.8" stroke="#1e1e1e" stroke-width="1.05" fill="none"/><text transform="translate(92.1,837) rotate(-90)" font-size="11" fill="#111" font-family="Liberation Sans" textLength="28.5" lengthAdjust="spacingAndGlyphs">15710</text><rect x="97.6" y="778.8" width="9.5" height="16.6" fill="#3e80c0"/><path d="M99.6 765.8 L102.3 762.4 L105.0 765.8" stroke="#1e1e1e" stroke-width="1.05" fill="none"/><text transform="translate(104.3,837) rotate(-90)" font-size="11" fill="#111" font-family="Liberation Sans" textLength="28.5" lengthAdjust="spacingAndGlyphs">15715</text><rect x="109.7" y="774.9" width="9.5" height="20.5" fill="#3e80c0"/><path d="M111.7 761.9 L114.4 758.5 L117.1 761.9" stroke="#1e1e1e" stroke-width="1.05" fill="none"/><text transform="translate(116.4,837) rotate(-90)" font-size="11" fill="#111" font-family="Liberation Sans" textLength="28.5" lengthAdjust="spacingAndGlyphs">15720</text><rect x="121.9" y="780.9" width="9.5" height="14.5" fill="#3e80c0"/><path d="M123.9 767.9 L126.6 764.5 L129.3 767.9" stroke="#1e1e1e" stroke-width="1.05" fill="none"/><text transform="translate(128.6,837) rotate(-90)" font-size="11" fill="#111" font-family="Liberation Sans" textLength="28.5" lengthAdjust="spacingAndGlyphs">15725</text><rect x="134.1" y="768.7" width="9.5" height="26.7" fill="#3e80c0"/><path d="M136.1 755.7 L138.8 752.3 L141.5 755.7" stroke="#1e1e1e" stroke-width="1.05" fill="none"/><text transform="translate(140.8,837) rotate(-90)" font-size="11" fill="#111" font-family="Liberation Sans" textLength="28.5" lengthAdjust="spacingAndGlyphs">15730</text><rect x="146.2" y="788.8" width="9.5" height="6.6" fill="#3e80c0"/><path d="M148.2 775.8 L150.9 772.4 L153.6 775.8" stroke="#1e1e1e" stroke-width="1.05" fill="none"/><text transform="translate(152.9,837) rotate(-90)" font-size="11" fill="#111" font-family="Liberation Sans" textLength="28.5" lengthAdjust="spacingAndGlyphs">15735</text><rect x="158.4" y="775.8" width="9.5" height="19.6" fill="#3e80c0"/><path d="M160.4 762.8 L163.1 759.4 L165.8 762.8" stroke="#1e1e1e" stroke-width="1.05" fill="none"/><text transform="translate(165.1,837) rotate(-90)" font-size="11" fill="#111" font-family="Liberation Sans" textLength="28.5" lengthAdjust="spacingAndGlyphs">15740</text><rect x="170.5" y="773.8" width="9.5" height="21.6" fill="#3e80c0"/><path d="M172.5 760.8 L175.2 757.4 L177.9 760.8" stroke="#1e1e1e" stroke-width="1.05" fill="none"/><text transform="translate(177.2,837) rotate(-90)" font-size="11" fill="#111" font-family="Liberation Sans" textLength="28.5" lengthAdjust="spacingAndGlyphs">15745</text><rect x="182.7" y="775.8" width="9.5" height="19.6" fill="#3e80c0"/><path d="M184.7 762.8 L187.4 759.4 L190.1 762.8" stroke="#1e1e1e" stroke-width="1.05" fill="none"/><text transform="translate(189.4,837) rotate(-90)" font-size="11" fill="#111" font-family="Liberation Sans" textLength="28.5" lengthAdjust="spacingAndGlyphs">15750</text><rect x="194.9" y="767.8" width="9.5" height="27.6" fill="#3e80c0"/><path d="M196.9 754.8 L199.6 751.4 L202.3 754.8" stroke="#1e1e1e" stroke-width="1.05" fill="none"/><text transform="translate(201.6,837) rotate(-90)" font-size="11" fill="#111" font-family="Liberation Sans" textLength="28.5" lengthAdjust="spacingAndGlyphs">15755</text><rect x="207.0" y="752.8" width="9.5" height="42.6" fill="#3e80c0"/><path d="M209.0 739.8 L211.7 736.4 L214.4 739.8" stroke="#1e1e1e" stroke-width="1.05" fill="none"/><text transform="translate(213.7,837) rotate(-90)" font-size="11" fill="#111" font-family="Liberation Sans" textLength="28.5" lengthAdjust="spacingAndGlyphs">15760</text><rect x="219.2" y="774.9" width="9.5" height="20.5" fill="#3e80c0"/><path d="M221.2 761.9 L223.9 758.5 L226.6 761.9" stroke="#1e1e1e" stroke-width="1.05" fill="none"/><text transform="translate(225.9,837) rotate(-90)" font-size="11" fill="#111" font-family="Liberation Sans" textLength="28.5" lengthAdjust="spacingAndGlyphs">15765</text><rect x="231.3" y="773.8" width="9.5" height="21.6" fill="#3e80c0"/><path d="M233.3 760.8 L236.0 757.4 L238.7 760.8" stroke="#1e1e1e" stroke-width="1.05" fill="none"/><text transform="translate(238.0,837) rotate(-90)" font-size="11" fill="#111" font-family="Liberation Sans" textLength="28.5" lengthAdjust="spacingAndGlyphs">15770</text><rect x="243.5" y="770.9" width="9.5" height="24.5" fill="#3e80c0"/><path d="M245.5 757.9 L248.2 754.5 L250.9 757.9" stroke="#1e1e1e" stroke-width="1.05" fill="none"/><text transform="translate(250.2,837) rotate(-90)" font-size="11" fill="#111" font-family="Liberation Sans" textLength="28.5" lengthAdjust="spacingAndGlyphs">15775</text><rect x="255.7" y="773.0" width="9.5" height="22.4" fill="#3e80c0"/><path d="M257.7 760.0 L260.4 756.6 L263.1 760.0" stroke="#1e1e1e" stroke-width="1.05" fill="none"/><text transform="translate(262.4,837) rotate(-90)" font-size="11" fill="#111" font-family="Liberation Sans" textLength="28.5" lengthAdjust="spacingAndGlyphs">15780</text><rect x="267.8" y="774.9" width="9.5" height="20.5" fill="#3e80c0"/><path d="M269.8 761.9 L272.5 758.5 L275.2 761.9" stroke="#1e1e1e" stroke-width="1.05" fill="none"/><text transform="translate(274.5,837) rotate(-90)" font-size="11" fill="#111" font-family="Liberation Sans" textLength="28.5" lengthAdjust="spacingAndGlyphs">15785</text><rect x="280.0" y="773.8" width="9.5" height="21.6" fill="#3e80c0"/><path d="M282.0 760.8 L284.7 757.4 L287.4 760.8" stroke="#1e1e1e" stroke-width="1.05" fill="none"/><text transform="translate(286.7,837) rotate(-90)" font-size="11" fill="#111" font-family="Liberation Sans" textLength="28.5" lengthAdjust="spacingAndGlyphs">15790</text><rect x="292.1" y="771.9" width="9.5" height="23.5" fill="#3e80c0"/><path d="M294.1 758.9 L296.8 755.5 L299.5 758.9" stroke="#1e1e1e" stroke-width="1.05" fill="none"/><text transform="translate(298.8,837) rotate(-90)" font-size="11" fill="#111" font-family="Liberation Sans" textLength="28.5" lengthAdjust="spacingAndGlyphs">15795</text><rect x="304.3" y="772.2" width="9.5" height="23.2" fill="#3e80c0"/><path d="M306.3 759.2 L309.0 755.8 L311.7 759.2" stroke="#1e1e1e" stroke-width="1.05" fill="none"/><text transform="translate(311.0,837) rotate(-90)" font-size="11" fill="#111" font-family="Liberation Sans" textLength="28.5" lengthAdjust="spacingAndGlyphs">15800</text><rect x="316.5" y="786.8" width="9.5" height="8.6" fill="#3e80c0"/><path d="M318.5 773.8 L321.2 770.4 L323.9 773.8" stroke="#1e1e1e" stroke-width="1.05" fill="none"/><text transform="translate(323.2,837) rotate(-90)" font-size="11" fill="#111" font-family="Liberation Sans" textLength="28.5" lengthAdjust="spacingAndGlyphs">15805</text><rect x="328.6" y="770.9" width="9.5" height="24.5" fill="#3e80c0"/><path d="M330.6 757.9 L333.3 754.5 L336.0 757.9" stroke="#1e1e1e" stroke-width="1.05" fill="none"/><text transform="translate(335.3,837) rotate(-90)" font-size="11" fill="#111" font-family="Liberation Sans" textLength="28.5" lengthAdjust="spacingAndGlyphs">15810</text><rect x="340.8" y="776.2" width="9.5" height="19.2" fill="#3e80c0"/><path d="M342.8 763.2 L345.5 759.8 L348.2 763.2" stroke="#1e1e1e" stroke-width="1.05" fill="none"/><text transform="translate(347.5,837) rotate(-90)" font-size="11" fill="#111" font-family="Liberation Sans" textLength="28.5" lengthAdjust="spacingAndGlyphs">15815</text><rect x="352.9" y="769.8" width="9.5" height="25.6" fill="#3e80c0"/><path d="M354.9 756.8 L357.6 753.4 L360.3 756.8" stroke="#1e1e1e" stroke-width="1.05" fill="none"/><text transform="translate(359.6,837) rotate(-90)" font-size="11" fill="#111" font-family="Liberation Sans" textLength="28.5" lengthAdjust="spacingAndGlyphs">15820</text><rect x="365.1" y="774.9" width="9.5" height="20.5" fill="#3e80c0"/><path d="M367.1 761.9 L369.8 758.5 L372.5 761.9" stroke="#1e1e1e" stroke-width="1.05" fill="none"/><text transform="translate(371.8,837) rotate(-90)" font-size="11" fill="#111" font-family="Liberation Sans" textLength="28.5" lengthAdjust="spacingAndGlyphs">15825</text><rect x="377.3" y="778.1" width="9.5" height="17.3" fill="#3e80c0"/><path d="M379.3 765.1 L382.0 761.7 L384.7 765.1" stroke="#1e1e1e" stroke-width="1.05" fill="none"/><text transform="translate(384.0,837) rotate(-90)" font-size="11" fill="#111" font-family="Liberation Sans" textLength="28.5" lengthAdjust="spacingAndGlyphs">15830</text><rect x="389.4" y="779.8" width="9.5" height="15.6" fill="#3e80c0"/><path d="M391.4 766.8 L394.1 763.4 L396.8 766.8" stroke="#1e1e1e" stroke-width="1.05" fill="none"/><text transform="translate(396.1,837) rotate(-90)" font-size="11" fill="#111" font-family="Liberation Sans" textLength="28.5" lengthAdjust="spacingAndGlyphs">15835</text><rect x="401.6" y="773.0" width="9.5" height="22.4" fill="#3e80c0"/><path d="M403.6 760.0 L406.3 756.6 L409.0 760.0" stroke="#1e1e1e" stroke-width="1.05" fill="none"/><text transform="translate(408.3,837) rotate(-90)" font-size="11" fill="#111" font-family="Liberation Sans" textLength="28.5" lengthAdjust="spacingAndGlyphs">15840</text><rect x="413.7" y="770.9" width="9.5" height="24.5" fill="#3e80c0"/><path d="M415.7 757.9 L418.4 754.5 L421.1 757.9" stroke="#1e1e1e" stroke-width="1.05" fill="none"/><text transform="translate(420.4,837) rotate(-90)" font-size="11" fill="#111" font-family="Liberation Sans" textLength="28.5" lengthAdjust="spacingAndGlyphs">15845</text><rect x="425.9" y="778.8" width="9.5" height="16.6" fill="#3e80c0"/><path d="M427.9 765.8 L430.6 762.4 L433.3 765.8" stroke="#1e1e1e" stroke-width="1.05" fill="none"/><text transform="translate(432.6,837) rotate(-90)" font-size="11" fill="#111" font-family="Liberation Sans" textLength="28.5" lengthAdjust="spacingAndGlyphs">15850</text><rect x="438.1" y="773.8" width="9.5" height="21.6" fill="#3e80c0"/><path d="M440.1 760.8 L442.8 757.4 L445.5 760.8" stroke="#1e1e1e" stroke-width="1.05" fill="none"/><text transform="translate(444.8,837) rotate(-90)" font-size="11" fill="#111" font-family="Liberation Sans" textLength="28.5" lengthAdjust="spacingAndGlyphs">15855</text><rect x="450.2" y="776.9" width="9.5" height="18.5" fill="#3e80c0"/><path d="M452.2 763.9 L454.9 760.5 L457.6 763.9" stroke="#1e1e1e" stroke-width="1.05" fill="none"/><text transform="translate(456.9,837) rotate(-90)" font-size="11" fill="#111" font-family="Liberation Sans" textLength="28.5" lengthAdjust="spacingAndGlyphs">15860</text><rect x="462.4" y="776.2" width="9.5" height="19.2" fill="#3e80c0"/><path d="M464.4 763.2 L467.1 759.8 L469.8 763.2" stroke="#1e1e1e" stroke-width="1.05" fill="none"/><text transform="translate(469.1,837) rotate(-90)" font-size="11" fill="#111" font-family="Liberation Sans" textLength="28.5" lengthAdjust="spacingAndGlyphs">15865</text><rect x="474.5" y="776.2" width="9.5" height="19.2" fill="#3e80c0"/><path d="M476.5 763.2 L479.2 759.8 L481.9 763.2" stroke="#1e1e1e" stroke-width="1.05" fill="none"/><text transform="translate(481.2,837) rotate(-90)" font-size="11" fill="#111" font-family="Liberation Sans" textLength="28.5" lengthAdjust="spacingAndGlyphs">15870</text><rect x="486.7" y="776.9" width="9.5" height="18.5" fill="#3e80c0"/><path d="M488.7 763.9 L491.4 760.5 L494.1 763.9" stroke="#1e1e1e" stroke-width="1.05" fill="none"/><text transform="translate(493.4,837) rotate(-90)" font-size="11" fill="#111" font-family="Liberation Sans" textLength="28.5" lengthAdjust="spacingAndGlyphs">15875</text><rect x="498.9" y="773.8" width="9.5" height="21.6" fill="#3e80c0"/><path d="M500.9 760.8 L503.6 757.4 L506.3 760.8" stroke="#1e1e1e" stroke-width="1.05" fill="none"/><text transform="translate(505.6,837) rotate(-90)" font-size="11" fill="#111" font-family="Liberation Sans" textLength="28.5" lengthAdjust="spacingAndGlyphs">15880</text><rect x="511.0" y="778.1" width="9.5" height="17.3" fill="#3e80c0"/><path d="M513.0 765.1 L515.7 761.7 L518.4 765.1" stroke="#1e1e1e" stroke-width="1.05" fill="none"/><text transform="translate(517.7,837) rotate(-90)" font-size="11" fill="#111" font-family="Liberation Sans" textLength="28.5" lengthAdjust="spacingAndGlyphs">15885</text><rect x="523.2" y="776.9" width="9.5" height="18.5" fill="#3e80c0"/><path d="M525.2 763.9 L527.9 760.5 L530.6 763.9" stroke="#1e1e1e" stroke-width="1.05" fill="none"/><text transform="translate(529.9,837) rotate(-90)" font-size="11" fill="#111" font-family="Liberation Sans" textLength="28.5" lengthAdjust="spacingAndGlyphs">15890</text><rect x="535.3" y="778.1" width="9.5" height="17.3" fill="#3e80c0"/><path d="M537.3 765.1 L540.0 761.7 L542.7 765.1" stroke="#1e1e1e" stroke-width="1.05" fill="none"/><text transform="translate(542.0,837) rotate(-90)" font-size="11" fill="#111" font-family="Liberation Sans" textLength="28.5" lengthAdjust="spacingAndGlyphs">15895</text><rect x="547.5" y="772.2" width="9.5" height="23.2" fill="#3e80c0"/><path d="M549.5 759.2 L552.2 755.8 L554.9 759.2" stroke="#1e1e1e" stroke-width="1.05" fill="none"/><text transform="translate(554.2,837) rotate(-90)" font-size="11" fill="#111" font-family="Liberation Sans" textLength="28.5" lengthAdjust="spacingAndGlyphs">15900</text><rect x="559.7" y="778.1" width="9.5" height="17.3" fill="#3e80c0"/><path d="M561.7 765.1 L564.4 761.7 L567.1 765.1" stroke="#1e1e1e" stroke-width="1.05" fill="none"/><text transform="translate(566.4,837) rotate(-90)" font-size="11" fill="#111" font-family="Liberation Sans" textLength="28.5" lengthAdjust="spacingAndGlyphs">15905</text><rect x="571.8" y="774.1" width="9.5" height="21.3" fill="#3e80c0"/><path d="M573.8 761.1 L576.5 757.7 L579.2 761.1" stroke="#1e1e1e" stroke-width="1.05" fill="none"/><text transform="translate(578.5,837) rotate(-90)" font-size="11" fill="#111" font-family="Liberation Sans" textLength="28.5" lengthAdjust="spacingAndGlyphs">15910</text><rect x="584.0" y="770.9" width="9.5" height="24.5" fill="#3e80c0"/><path d="M586.0 757.9 L588.7 754.5 L591.4 757.9" stroke="#1e1e1e" stroke-width="1.05" fill="none"/><text transform="translate(590.7,837) rotate(-90)" font-size="11" fill="#111" font-family="Liberation Sans" textLength="28.5" lengthAdjust="spacingAndGlyphs">15915</text><rect x="596.1" y="769.8" width="9.5" height="25.6" fill="#3e80c0"/><path d="M598.1 756.8 L600.8 753.4 L603.5 756.8" stroke="#1e1e1e" stroke-width="1.05" fill="none"/><text transform="translate(602.8,837) rotate(-90)" font-size="11" fill="#111" font-family="Liberation Sans" textLength="28.5" lengthAdjust="spacingAndGlyphs">15920</text><rect x="608.3" y="773.0" width="9.5" height="22.4" fill="#3e80c0"/><path d="M610.3 760.0 L613.0 756.6 L615.7 760.0" stroke="#1e1e1e" stroke-width="1.05" fill="none"/><text transform="translate(615.0,837) rotate(-90)" font-size="11" fill="#111" font-family="Liberation Sans" textLength="28.5" lengthAdjust="spacingAndGlyphs">15925</text><rect x="620.5" y="778.1" width="9.5" height="17.3" fill="#3e80c0"/><path d="M622.5 765.1 L625.2 761.7 L627.9 765.1" stroke="#1e1e1e" stroke-width="1.05" fill="none"/><text transform="translate(627.2,837) rotate(-90)" font-size="11" fill="#111" font-family="Liberation Sans" textLength="28.5" lengthAdjust="spacingAndGlyphs">15930</text><rect x="632.6" y="772.2" width="9.5" height="23.2" fill="#3e80c0"/><path d="M634.6 759.2 L637.3 755.8 L640.0 759.2" stroke="#1e1e1e" stroke-width="1.05" fill="none"/><text transform="translate(639.3,837) rotate(-90)" font-size="11" fill="#111" font-family="Liberation Sans" textLength="28.5" lengthAdjust="spacingAndGlyphs">15935</text><rect x="644.8" y="774.9" width="9.5" height="20.5" fill="#3e80c0"/><path d="M646.8 761.9 L649.5 758.5 L652.2 761.9" stroke="#1e1e1e" stroke-width="1.05" fill="none"/><text transform="translate(651.5,837) rotate(-90)" font-size="11" fill="#111" font-family="Liberation Sans" textLength="28.5" lengthAdjust="spacingAndGlyphs">15940</text><rect x="656.9" y="774.1" width="9.5" height="21.3" fill="#3e80c0"/><path d="M658.9 761.1 L661.6 757.7 L664.3 761.1" stroke="#1e1e1e" stroke-width="1.05" fill="none"/><text transform="translate(663.6,837) rotate(-90)" font-size="11" fill="#111" font-family="Liberation Sans" textLength="28.5" lengthAdjust="spacingAndGlyphs">15945</text><rect x="669.1" y="769.8" width="9.5" height="25.6" fill="#3e80c0"/><path d="M671.1 756.8 L673.8 753.4 L676.5 756.8" stroke="#1e1e1e" stroke-width="1.05" fill="none"/><text transform="translate(675.8,837) rotate(-90)" font-size="11" fill="#111" font-family="Liberation Sans" textLength="28.5" lengthAdjust="spacingAndGlyphs">15950</text><rect x="681.3" y="769.8" width="9.5" height="25.6" fill="#3e80c0"/><path d="M683.3 756.8 L686.0 753.4 L688.7 756.8" stroke="#1e1e1e" stroke-width="1.05" fill="none"/><text transform="translate(688.0,837) rotate(-90)" font-size="11" fill="#111" font-family="Liberation Sans" textLength="28.5" lengthAdjust="spacingAndGlyphs">15955</text><rect x="693.4" y="772.2" width="9.5" height="23.2" fill="#3e80c0"/><path d="M695.4 759.2 L698.1 755.8 L700.8 759.2" stroke="#1e1e1e" stroke-width="1.05" fill="none"/><text transform="translate(700.1,837) rotate(-90)" font-size="11" fill="#111" font-family="Liberation Sans" textLength="28.5" lengthAdjust="spacingAndGlyphs">15960</text><rect x="705.6" y="778.1" width="9.5" height="17.3" fill="#3e80c0"/><path d="M707.6 765.1 L710.3 761.7 L713.0 765.1" stroke="#1e1e1e" stroke-width="1.05" fill="none"/><text transform="translate(712.3,837) rotate(-90)" font-size="11" fill="#111" font-family="Liberation Sans" textLength="28.5" lengthAdjust="spacingAndGlyphs">15965</text><rect x="717.7" y="768.7" width="9.5" height="26.7" fill="#3e80c0"/><path d="M719.7 755.7 L722.4 752.3 L725.1 755.7" stroke="#1e1e1e" stroke-width="1.05" fill="none"/><text transform="translate(724.4,837) rotate(-90)" font-size="11" fill="#111" font-family="Liberation Sans" textLength="28.5" lengthAdjust="spacingAndGlyphs">15970</text><rect x="729.9" y="773.0" width="9.5" height="22.4" fill="#3e80c0"/><path d="M731.9 760.0 L734.6 756.6 L737.3 760.0" stroke="#1e1e1e" stroke-width="1.05" fill="none"/><text transform="translate(736.6,837) rotate(-90)" font-size="11" fill="#111" font-family="Liberation Sans" textLength="28.5" lengthAdjust="spacingAndGlyphs">15975</text><rect x="742.1" y="765.1" width="9.5" height="30.3" fill="#3e80c0"/><path d="M744.1 752.1 L746.8 748.7 L749.5 752.1" stroke="#1e1e1e" stroke-width="1.05" fill="none"/><text transform="translate(748.8,837) rotate(-90)" font-size="11" fill="#111" font-family="Liberation Sans" textLength="28.5" lengthAdjust="spacingAndGlyphs">15980</text><rect x="754.2" y="782.0" width="9.5" height="13.4" fill="#3e80c0"/><path d="M756.2 769.0 L758.9 765.6 L761.6 769.0" stroke="#1e1e1e" stroke-width="1.05" fill="none"/><text transform="translate(760.9,837) rotate(-90)" font-size="11" fill="#111" font-family="Liberation Sans" textLength="28.5" lengthAdjust="spacingAndGlyphs">15985</text><rect x="766.4" y="774.9" width="9.5" height="20.5" fill="#3e80c0"/><path d="M768.4 761.9 L771.1 758.5 L773.8 761.9" stroke="#1e1e1e" stroke-width="1.05" fill="none"/><text transform="translate(773.1,837) rotate(-90)" font-size="11" fill="#111" font-family="Liberation Sans" textLength="28.5" lengthAdjust="spacingAndGlyphs">15990</text><rect x="778.5" y="773.0" width="9.5" height="22.4" fill="#3e80c0"/><path d="M780.5 760.0 L783.2 756.6 L785.9 760.0" stroke="#1e1e1e" stroke-width="1.05" fill="none"/><text transform="translate(785.2,837) rotate(-90)" font-size="11" fill="#111" font-family="Liberation Sans" textLength="28.5" lengthAdjust="spacingAndGlyphs">15995</text><rect x="790.7" y="774.1" width="9.5" height="21.3" fill="#3e80c0"/><path d="M792.7 761.1 L795.4 757.7 L798.1 761.1" stroke="#1e1e1e" stroke-width="1.05" fill="none"/><text transform="translate(797.4,837) rotate(-90)" font-size="11" fill="#111" font-family="Liberation Sans" textLength="28.5" lengthAdjust="spacingAndGlyphs">16000</text><rect x="802.9" y="767.9" width="9.5" height="27.5" fill="#3e80c0"/><path d="M804.9 754.9 L807.6 751.5 L810.3 754.9" stroke="#1e1e1e" stroke-width="1.05" fill="none"/><text transform="translate(809.6,837) rotate(-90)" font-size="11" fill="#111" font-family="Liberation Sans" textLength="28.5" lengthAdjust="spacingAndGlyphs">16005</text><rect x="815.0" y="770.9" width="9.5" height="24.5" fill="#3e80c0"/><path d="M817.0 757.9 L819.7 754.5 L822.4 757.9" stroke="#1e1e1e" stroke-width="1.05" fill="none"/><text transform="translate(821.7,837) rotate(-90)" font-size="11" fill="#111" font-family="Liberation Sans" textLength="28.5" lengthAdjust="spacingAndGlyphs">16010</text><rect x="827.2" y="773.0" width="9.5" height="22.4" fill="#3e80c0"/><path d="M829.2 760.0 L831.9 756.6 L834.6 760.0" stroke="#1e1e1e" stroke-width="1.05" fill="none"/><text transform="translate(833.9,837) rotate(-90)" font-size="11" fill="#111" font-family="Liberation Sans" textLength="28.5" lengthAdjust="spacingAndGlyphs">16015</text><rect x="839.3" y="778.1" width="9.5" height="17.3" fill="#3e80c0"/><path d="M841.3 765.1 L844.0 761.7 L846.7 765.1" stroke="#1e1e1e" stroke-width="1.05" fill="none"/><text transform="translate(846.0,837) rotate(-90)" font-size="11" fill="#111" font-family="Liberation Sans" textLength="28.5" lengthAdjust="spacingAndGlyphs">16020</text><rect x="851.5" y="773.0" width="9.5" height="22.4" fill="#3e80c0"/><path d="M853.5 760.0 L856.2 756.6 L858.9 760.0" stroke="#1e1e1e" stroke-width="1.05" fill="none"/><text transform="translate(858.2,837) rotate(-90)" font-size="11" fill="#111" font-family="Liberation Sans" textLength="28.5" lengthAdjust="spacingAndGlyphs">16025</text><rect x="863.7" y="769.8" width="9.5" height="25.6" fill="#3e80c0"/><path d="M865.7 756.8 L868.4 753.4 L871.1 756.8" stroke="#1e1e1e" stroke-width="1.05" fill="none"/><text transform="translate(870.4,837) rotate(-90)" font-size="11" fill="#111" font-family="Liberation Sans" textLength="28.5" lengthAdjust="spacingAndGlyphs">16030</text><rect x="875.8" y="778.1" width="9.5" height="17.3" fill="#3e80c0"/><path d="M877.8 765.1 L880.5 761.7 L883.2 765.1" stroke="#1e1e1e" stroke-width="1.05" fill="none"/><text transform="translate(882.5,837) rotate(-90)" font-size="11" fill="#111" font-family="Liberation Sans" textLength="28.5" lengthAdjust="spacingAndGlyphs">16035</text><rect x="888.0" y="770.9" width="9.5" height="24.5" fill="#3e80c0"/><path d="M890.0 757.9 L892.7 754.5 L895.4 757.9" stroke="#1e1e1e" stroke-width="1.05" fill="none"/><text transform="translate(894.7,837) rotate(-90)" font-size="11" fill="#111" font-family="Liberation Sans" textLength="28.5" lengthAdjust="spacingAndGlyphs">16040</text><rect x="900.1" y="769.8" width="9.5" height="25.6" fill="#3e80c0"/><path d="M902.1 756.8 L904.8 753.4 L907.5 756.8" stroke="#1e1e1e" stroke-width="1.05" fill="none"/><text transform="translate(906.8,837) rotate(-90)" font-size="11" fill="#111" font-family="Liberation Sans" textLength="28.5" lengthAdjust="spacingAndGlyphs">16045</text><rect x="912.3" y="768.7" width="9.5" height="26.7" fill="#3e80c0"/><path d="M914.3 755.7 L917.0 752.3 L919.7 755.7" stroke="#1e1e1e" stroke-width="1.05" fill="none"/><text transform="translate(919.0,837) rotate(-90)" font-size="11" fill="#111" font-family="Liberation Sans" textLength="28.5" lengthAdjust="spacingAndGlyphs">16050</text><rect x="924.5" y="776.9" width="9.5" height="18.5" fill="#3e80c0"/><path d="M926.5 763.9 L929.2 760.5 L931.9 763.9" stroke="#1e1e1e" stroke-width="1.05" fill="none"/><text transform="translate(931.2,837) rotate(-90)" font-size="11" fill="#111" font-family="Liberation Sans" textLength="28.5" lengthAdjust="spacingAndGlyphs">16055</text><rect x="936.6" y="776.2" width="9.5" height="19.2" fill="#3e80c0"/><path d="M938.6 763.2 L941.3 759.8 L944.0 763.2" stroke="#1e1e1e" stroke-width="1.05" fill="none"/><text transform="translate(943.3,837) rotate(-90)" font-size="11" fill="#111" font-family="Liberation Sans" textLength="28.5" lengthAdjust="spacingAndGlyphs">16060</text><rect x="948.8" y="770.9" width="9.5" height="24.5" fill="#3e80c0"/><path d="M950.8 757.9 L953.5 754.5 L956.2 757.9" stroke="#1e1e1e" stroke-width="1.05" fill="none"/><text transform="translate(955.5,837) rotate(-90)" font-size="11" fill="#111" font-family="Liberation Sans" textLength="28.5" lengthAdjust="spacingAndGlyphs">16065</text><rect x="960.9" y="783.7" width="9.5" height="11.7" fill="#3e80c0"/><path d="M962.9 770.7 L965.6 767.3 L968.3 770.7" stroke="#1e1e1e" stroke-width="1.05" fill="none"/><text transform="translate(967.6,837) rotate(-90)" font-size="11" fill="#111" font-family="Liberation Sans" textLength="28.5" lengthAdjust="spacingAndGlyphs">16070</text><rect x="973.1" y="774.1" width="9.5" height="21.3" fill="#3e80c0"/><path d="M975.1 761.1 L977.8 757.7 L980.5 761.1" stroke="#1e1e1e" stroke-width="1.05" fill="none"/><text transform="translate(979.8,837) rotate(-90)" font-size="11" fill="#111" font-family="Liberation Sans" textLength="28.5" lengthAdjust="spacingAndGlyphs">16075</text><rect x="985.3" y="778.1" width="9.5" height="17.3" fill="#3e80c0"/><path d="M987.3 765.1 L990.0 761.7 L992.7 765.1" stroke="#1e1e1e" stroke-width="1.05" fill="none"/><text transform="translate(992.0,837) rotate(-90)" font-size="11" fill="#111" font-family="Liberation Sans" textLength="28.5" lengthAdjust="spacingAndGlyphs">16080</text><rect x="997.4" y="774.1" width="9.5" height="21.3" fill="#3e80c0"/><path d="M999.4 761.1 L1002.1 757.7 L1004.8 761.1" stroke="#1e1e1e" stroke-width="1.05" fill="none"/><text transform="translate(1004.1,837) rotate(-90)" font-size="11" fill="#111" font-family="Liberation Sans" textLength="28.5" lengthAdjust="spacingAndGlyphs">16085</text><rect x="1009.6" y="774.1" width="9.5" height="21.3" fill="#3e80c0"/><path d="M1011.6 761.1 L1014.3 757.7 L1017.0 761.1" stroke="#1e1e1e" stroke-width="1.05" fill="none"/><text transform="translate(1016.3,837) rotate(-90)" font-size="11" fill="#111" font-family="Liberation Sans" textLength="28.5" lengthAdjust="spacingAndGlyphs">16090</text><rect x="1021.7" y="778.8" width="9.5" height="16.6" fill="#3e80c0"/><path d="M1023.7 765.8 L1026.4 762.4 L1029.1 765.8" stroke="#1e1e1e" stroke-width="1.05" fill="none"/><text transform="translate(1028.4,837) rotate(-90)" font-size="11" fill="#111" font-family="Liberation Sans" textLength="28.5" lengthAdjust="spacingAndGlyphs">16095</text><rect x="1033.9" y="778.8" width="9.5" height="16.6" fill="#3e80c0"/><path d="M1035.9 765.8 L1038.6 762.4 L1041.3 765.8" stroke="#1e1e1e" stroke-width="1.05" fill="none"/><text transform="translate(1040.6,837) rotate(-90)" font-size="11" fill="#111" font-family="Liberation Sans" textLength="28.5" lengthAdjust="spacingAndGlyphs">16100</text><rect x="1046.1" y="767.9" width="9.5" height="27.5" fill="#3e80c0"/><path d="M1048.1 754.9 L1050.8 751.5 L1053.5 754.9" stroke="#1e1e1e" stroke-width="1.05" fill="none"/><text transform="translate(1052.8,837) rotate(-90)" font-size="11" fill="#111" font-family="Liberation Sans" textLength="28.5" lengthAdjust="spacingAndGlyphs">16105</text><rect x="1058.2" y="782.0" width="9.5" height="13.4" fill="#3e80c0"/><path d="M1060.2 769.0 L1062.9 765.6 L1065.6 769.0" stroke="#1e1e1e" stroke-width="1.05" fill="none"/><text transform="translate(1064.9,837) rotate(-90)" font-size="11" fill="#111" font-family="Liberation Sans" textLength="28.5" lengthAdjust="spacingAndGlyphs">16110</text><rect x="1070.4" y="780.9" width="9.5" height="14.5" fill="#3e80c0"/><path d="M1072.4 767.9 L1075.1 764.5 L1077.8 767.9" stroke="#1e1e1e" stroke-width="1.05" fill="none"/><text transform="translate(1077.1,837) rotate(-90)" font-size="11" fill="#111" font-family="Liberation Sans" textLength="28.5" lengthAdjust="spacingAndGlyphs">16115</text><rect x="1082.5" y="775.8" width="9.5" height="19.6" fill="#3e80c0"/><path d="M1084.5 762.8 L1087.2 759.4 L1089.9 762.8" stroke="#1e1e1e" stroke-width="1.05" fill="none"/><text transform="translate(1089.2,837) rotate(-90)" font-size="11" fill="#111" font-family="Liberation Sans" textLength="28.5" lengthAdjust="spacingAndGlyphs">16120</text><rect x="1094.7" y="785.6" width="9.5" height="9.8" fill="#3e80c0"/><path d="M1096.7 772.6 L1099.4 769.2 L1102.1 772.6" stroke="#1e1e1e" stroke-width="1.05" fill="none"/><text transform="translate(1101.4,837) rotate(-90)" font-size="11" fill="#111" font-family="Liberation Sans" textLength="28.5" lengthAdjust="spacingAndGlyphs">16125</text><rect x="1106.9" y="771.9" width="9.5" height="23.5" fill="#3e80c0"/><path d="M1108.9 758.9 L1111.6 755.5 L1114.3 758.9" stroke="#1e1e1e" stroke-width="1.05" fill="none"/><text transform="translate(1113.6,837) rotate(-90)" font-size="11" fill="#111" font-family="Liberation Sans" textLength="28.5" lengthAdjust="spacingAndGlyphs">16130</text><rect x="1119.0" y="770.9" width="9.5" height="24.5" fill="#3e80c0"/><path d="M1121.0 757.9 L1123.7 754.5 L1126.4 757.9" stroke="#1e1e1e" stroke-width="1.05" fill="none"/><text transform="translate(1125.7,837) rotate(-90)" font-size="11" fill="#111" font-family="Liberation Sans" textLength="28.5" lengthAdjust="spacingAndGlyphs">16135</text><rect x="1131.2" y="773.8" width="9.5" height="21.6" fill="#3e80c0"/><path d="M1133.2 760.8 L1135.9 757.4 L1138.6 760.8" stroke="#1e1e1e" stroke-width="1.05" fill="none"/><text transform="translate(1137.9,837) rotate(-90)" font-size="11" fill="#111" font-family="Liberation Sans" textLength="28.5" lengthAdjust="spacingAndGlyphs">16140</text><rect x="1143.3" y="779.8" width="9.5" height="15.6" fill="#3e80c0"/><path d="M1145.3 766.8 L1148.0 763.4 L1150.7 766.8" stroke="#1e1e1e" stroke-width="1.05" fill="none"/><text transform="translate(1150.0,837) rotate(-90)" font-size="11" fill="#111" font-family="Liberation Sans" textLength="28.5" lengthAdjust="spacingAndGlyphs">16145</text><rect x="1155.5" y="775.8" width="9.5" height="19.6" fill="#3e80c0"/><path d="M1157.5 762.8 L1160.2 759.4 L1162.9 762.8" stroke="#1e1e1e" stroke-width="1.05" fill="none"/><text transform="translate(1162.2,837) rotate(-90)" font-size="11" fill="#111" font-family="Liberation Sans" textLength="28.5" lengthAdjust="spacingAndGlyphs">16150</text><rect x="1167.7" y="773.8" width="9.5" height="21.6" fill="#3e80c0"/><path d="M1169.7 760.8 L1172.4 757.4 L1175.1 760.8" stroke="#1e1e1e" stroke-width="1.05" fill="none"/><text transform="translate(1174.4,837) rotate(-90)" font-size="11" fill="#111" font-family="Liberation Sans" textLength="28.5" lengthAdjust="spacingAndGlyphs">16155</text><rect x="1179.8" y="778.1" width="9.5" height="17.3" fill="#3e80c0"/><path d="M1181.8 765.1 L1184.5 761.7 L1187.2 765.1" stroke="#1e1e1e" stroke-width="1.05" fill="none"/><text transform="translate(1186.5,837) rotate(-90)" font-size="11" fill="#111" font-family="Liberation Sans" textLength="28.5" lengthAdjust="spacingAndGlyphs">16160</text><rect x="1192.0" y="782.0" width="9.5" height="13.4" fill="#3e80c0"/><path d="M1194.0 769.0 L1196.7 765.6 L1199.4 769.0" stroke="#1e1e1e" stroke-width="1.05" fill="none"/><text transform="translate(1198.7,837) rotate(-90)" font-size="11" fill="#111" font-family="Liberation Sans" textLength="28.5" lengthAdjust="spacingAndGlyphs">16165</text><rect x="1204.1" y="774.9" width="9.5" height="20.5" fill="#3e80c0"/><path d="M1206.1 761.9 L1208.8 758.5 L1211.5 761.9" stroke="#1e1e1e" stroke-width="1.05" fill="none"/><text transform="translate(1210.8,837) rotate(-90)" font-size="11" fill="#111" font-family="Liberation Sans" textLength="28.5" lengthAdjust="spacingAndGlyphs">16170</text><rect x="1216.3" y="765.1" width="9.5" height="30.3" fill="#3e80c0"/><path d="M1218.3 752.1 L1221.0 748.7 L1223.7 752.1" stroke="#1e1e1e" stroke-width="1.05" fill="none"/><text transform="translate(1223.0,837) rotate(-90)" font-size="11" fill="#111" font-family="Liberation Sans" textLength="28.5" lengthAdjust="spacingAndGlyphs">16175</text><rect x="1228.5" y="783.7" width="9.5" height="11.7" fill="#3e80c0"/><path d="M1230.5 770.7 L1233.2 767.3 L1235.9 770.7" stroke="#1e1e1e" stroke-width="1.05" fill="none"/><text transform="translate(1235.2,837) rotate(-90)" font-size="11" fill="#111" font-family="Liberation Sans" textLength="28.5" lengthAdjust="spacingAndGlyphs">16180</text><rect x="1240.6" y="778.8" width="9.5" height="16.6" fill="#3e80c0"/><path d="M1242.6 765.8 L1245.3 762.4 L1248.0 765.8" stroke="#1e1e1e" stroke-width="1.05" fill="none"/><text transform="translate(1247.3,837) rotate(-90)" font-size="11" fill="#111" font-family="Liberation Sans" textLength="28.5" lengthAdjust="spacingAndGlyphs">16185</text><rect x="1252.8" y="780.9" width="9.5" height="14.5" fill="#3e80c0"/><path d="M1254.8 767.9 L1257.5 764.5 L1260.2 767.9" stroke="#1e1e1e" stroke-width="1.05" fill="none"/><text transform="translate(1259.5,837) rotate(-90)" font-size="11" fill="#111" font-family="Liberation Sans" textLength="28.5" lengthAdjust="spacingAndGlyphs">16190</text><rect x="1264.9" y="774.2" width="9.5" height="21.2" fill="#3e80c0"/><path d="M1266.9 761.2 L1269.6 757.8 L1272.3 761.2" stroke="#1e1e1e" stroke-width="1.05" fill="none"/><text transform="translate(1271.6,837) rotate(-90)" font-size="11" fill="#111" font-family="Liberation Sans" textLength="28.5" lengthAdjust="spacingAndGlyphs">16195</text><rect x="1277.1" y="778.1" width="9.5" height="17.3" fill="#3e80c0"/><path d="M1279.1 765.1 L1281.8 761.7 L1284.5 765.1" stroke="#1e1e1e" stroke-width="1.05" fill="none"/><text transform="translate(1283.8,837) rotate(-90)" font-size="11" fill="#111" font-family="Liberation Sans" textLength="28.5" lengthAdjust="spacingAndGlyphs">16200</text><rect x="1289.3" y="770.2" width="9.5" height="25.2" fill="#3e80c0"/><path d="M1291.3 757.2 L1294.0 753.8 L1296.7 757.2" stroke="#1e1e1e" stroke-width="1.05" fill="none"/><text transform="translate(1296.0,837) rotate(-90)" font-size="11" fill="#111" font-family="Liberation Sans" textLength="28.5" lengthAdjust="spacingAndGlyphs">16205</text><rect x="1301.4" y="774.2" width="9.5" height="21.2" fill="#3e80c0"/><path d="M1303.4 761.2 L1306.1 757.8 L1308.8 761.2" stroke="#1e1e1e" stroke-width="1.05" fill="none"/><text transform="translate(1308.1,837) rotate(-90)" font-size="11" fill="#111" font-family="Liberation Sans" textLength="28.5" lengthAdjust="spacingAndGlyphs">16210</text><rect x="1313.6" y="771.3" width="9.5" height="24.1" fill="#3e80c0"/><path d="M1315.6 758.3 L1318.3 754.9 L1321.0 758.3" stroke="#1e1e1e" stroke-width="1.05" fill="none"/><text transform="translate(1320.3,837) rotate(-90)" font-size="11" fill="#111" font-family="Liberation Sans" textLength="28.5" lengthAdjust="spacingAndGlyphs">16215</text><rect x="1325.7" y="775.9" width="9.5" height="19.5" fill="#3e80c0"/><path d="M1327.7 762.9 L1330.4 759.5 L1333.1 762.9" stroke="#1e1e1e" stroke-width="1.05" fill="none"/><text transform="translate(1332.4,837) rotate(-90)" font-size="11" fill="#111" font-family="Liberation Sans" textLength="28.5" lengthAdjust="spacingAndGlyphs">16220</text><rect x="1337.9" y="771.3" width="9.5" height="24.1" fill="#3e80c0"/><path d="M1339.9 758.3 L1342.6 754.9 L1345.3 758.3" stroke="#1e1e1e" stroke-width="1.05" fill="none"/><text transform="translate(1344.6,837) rotate(-90)" font-size="11" fill="#111" font-family="Liberation Sans" textLength="28.5" lengthAdjust="spacingAndGlyphs">16225</text><rect x="1350.1" y="764.8" width="9.5" height="30.6" fill="#3e80c0"/><path d="M1352.1 751.8 L1354.8 748.4 L1357.5 751.8" stroke="#1e1e1e" stroke-width="1.05" fill="none"/><text transform="translate(1356.8,837) rotate(-90)" font-size="11" fill="#111" font-family="Liberation Sans" textLength="28.5" lengthAdjust="spacingAndGlyphs">16230</text><rect x="1362.2" y="779.3" width="9.5" height="16.1" fill="#3e80c0"/><path d="M1364.2 766.3 L1366.9 762.9 L1369.6 766.3" stroke="#1e1e1e" stroke-width="1.05" fill="none"/><text transform="translate(1368.9,837) rotate(-90)" font-size="11" fill="#111" font-family="Liberation Sans" textLength="28.5" lengthAdjust="spacingAndGlyphs">16235</text><rect x="1374.4" y="775.9" width="9.5" height="19.5" fill="#3e80c0"/><path d="M1376.4 762.9 L1379.1 759.5 L1381.8 762.9" stroke="#1e1e1e" stroke-width="1.05" fill="none"/><text transform="translate(1381.1,837) rotate(-90)" font-size="11" fill="#111" font-family="Liberation Sans" textLength="28.5" lengthAdjust="spacingAndGlyphs">16240</text><rect x="1386.5" y="778.1" width="9.5" height="17.3" fill="#3e80c0"/><path d="M1388.5 765.1 L1391.2 761.7 L1393.9 765.1" stroke="#1e1e1e" stroke-width="1.05" fill="none"/><text transform="translate(1393.2,837) rotate(-90)" font-size="11" fill="#111" font-family="Liberation Sans" textLength="28.5" lengthAdjust="spacingAndGlyphs">16245</text><rect x="1398.7" y="775.9" width="9.5" height="19.5" fill="#3e80c0"/><path d="M1400.7 762.9 L1403.4 759.5 L1406.1 762.9" stroke="#1e1e1e" stroke-width="1.05" fill="none"/><text transform="translate(1405.4,837) rotate(-90)" font-size="11" fill="#111" font-family="Liberation Sans" textLength="28.5" lengthAdjust="spacingAndGlyphs">16250</text><rect x="1410.9" y="782.2" width="9.5" height="13.2" fill="#3e80c0"/><path d="M1412.9 769.2 L1415.6 765.8 L1418.3 769.2" stroke="#1e1e1e" stroke-width="1.05" fill="none"/><text transform="translate(1417.6,837) rotate(-90)" font-size="11" fill="#111" font-family="Liberation Sans" textLength="28.5" lengthAdjust="spacingAndGlyphs">16255</text><rect x="1423.0" y="775.9" width="9.5" height="19.5" fill="#3e80c0"/><path d="M1425.0 762.9 L1427.7 759.5 L1430.4 762.9" stroke="#1e1e1e" stroke-width="1.05" fill="none"/><text transform="translate(1429.7,837) rotate(-90)" font-size="11" fill="#111" font-family="Liberation Sans" textLength="28.5" lengthAdjust="spacingAndGlyphs">16260</text><rect x="1435.2" y="774.2" width="9.5" height="21.2" fill="#3e80c0"/><path d="M1437.2 761.2 L1439.9 757.8 L1442.6 761.2" stroke="#1e1e1e" stroke-width="1.05" fill="none"/><text transform="translate(1441.9,837) rotate(-90)" font-size="11" fill="#111" font-family="Liberation Sans" textLength="28.5" lengthAdjust="spacingAndGlyphs">16265</text><rect x="1447.3" y="770.2" width="9.5" height="25.2" fill="#3e80c0"/><path d="M1449.3 757.2 L1452.0 753.8 L1454.7 757.2" stroke="#1e1e1e" stroke-width="1.05" fill="none"/><text transform="translate(1454.0,837) rotate(-90)" font-size="11" fill="#111" font-family="Liberation Sans" textLength="28.5" lengthAdjust="spacingAndGlyphs">16270</text><rect x="1459.5" y="781.0" width="9.5" height="14.4" fill="#3e80c0"/><path d="M1461.5 768.0 L1464.2 764.6 L1466.9 768.0" stroke="#1e1e1e" stroke-width="1.05" fill="none"/><text transform="translate(1466.2,837) rotate(-90)" font-size="11" fill="#111" font-family="Liberation Sans" textLength="28.5" lengthAdjust="spacingAndGlyphs">16275</text><rect x="1471.7" y="780.1" width="9.5" height="15.3" fill="#3e80c0"/><path d="M1473.7 767.1 L1476.4 763.7 L1479.1 767.1" stroke="#1e1e1e" stroke-width="1.05" fill="none"/><text transform="translate(1478.4,837) rotate(-90)" font-size="11" fill="#111" font-family="Liberation Sans" textLength="28.5" lengthAdjust="spacingAndGlyphs">16280</text><rect x="1483.8" y="774.2" width="9.5" height="21.2" fill="#3e80c0"/><path d="M1485.8 761.2 L1488.5 757.8 L1491.2 761.2" stroke="#1e1e1e" stroke-width="1.05" fill="none"/><text transform="translate(1490.5,837) rotate(-90)" font-size="11" fill="#111" font-family="Liberation Sans" textLength="28.5" lengthAdjust="spacingAndGlyphs">16285</text><rect x="1496.0" y="780.1" width="9.5" height="15.3" fill="#3e80c0"/><path d="M1498.0 767.1 L1500.7 763.7 L1503.4 767.1" stroke="#1e1e1e" stroke-width="1.05" fill="none"/><text transform="translate(1502.7,837) rotate(-90)" font-size="11" fill="#111" font-family="Liberation Sans" textLength="28.5" lengthAdjust="spacingAndGlyphs">16290</text><rect x="1508.1" y="775.9" width="9.5" height="19.5" fill="#3e80c0"/><path d="M1510.1 762.9 L1512.8 759.5 L1515.5 762.9" stroke="#1e1e1e" stroke-width="1.05" fill="none"/><text transform="translate(1514.8,837) rotate(-90)" font-size="11" fill="#111" font-family="Liberation Sans" textLength="28.5" lengthAdjust="spacingAndGlyphs">16295</text><rect x="1520.3" y="770.2" width="5" height="25.2" fill="#3e80c0"/><text transform="translate(1527.0,837) rotate(-90)" font-size="11" fill="#111" font-family="Liberation Sans" textLength="28.5" lengthAdjust="spacingAndGlyphs">16300</text><line x1="65" y1="800.2" x2="1526" y2="800.2" stroke="#000" stroke-width="1.6"/><line x1="211.3" y1="712.9" x2="211.3" y2="800.7" stroke="#c81e32" stroke-width="1.4"/><path d="M208.6 739.8 L211.3 736.4 L214.0 739.8" stroke="#1e1e1e" stroke-width="1.05" fill="none"/><text x="795" y="851.5" font-size="12" fill="#111" text-anchor="middle" font-family="Liberation Sans">频率 Khz</text></svg>
<div class="t" style="left:1414px;top:820px;font-size:31px;line-height:38px;font-weight:bold;color:#0b4596;-webkit-text-stroke:0px;text-shadow:-2px 0 #fff,2px 0 #fff,0 -2px #fff,0 2px #fff,-2px -2px #fff,2px 2px #fff,-2px 2px #fff,2px -2px #fff;letter-spacing:0px;">矿石收音机</div>
<div class="t" style="left:1415px;top:861px;font-size:16.2px;line-height:18px;font-weight:bold;color:#0b4596;text-shadow:-1px 0 #fff,1px 0 #fff,0 -1px #fff,0 1px #fff;">www.crystalradio.cn</div>
</body></html>
